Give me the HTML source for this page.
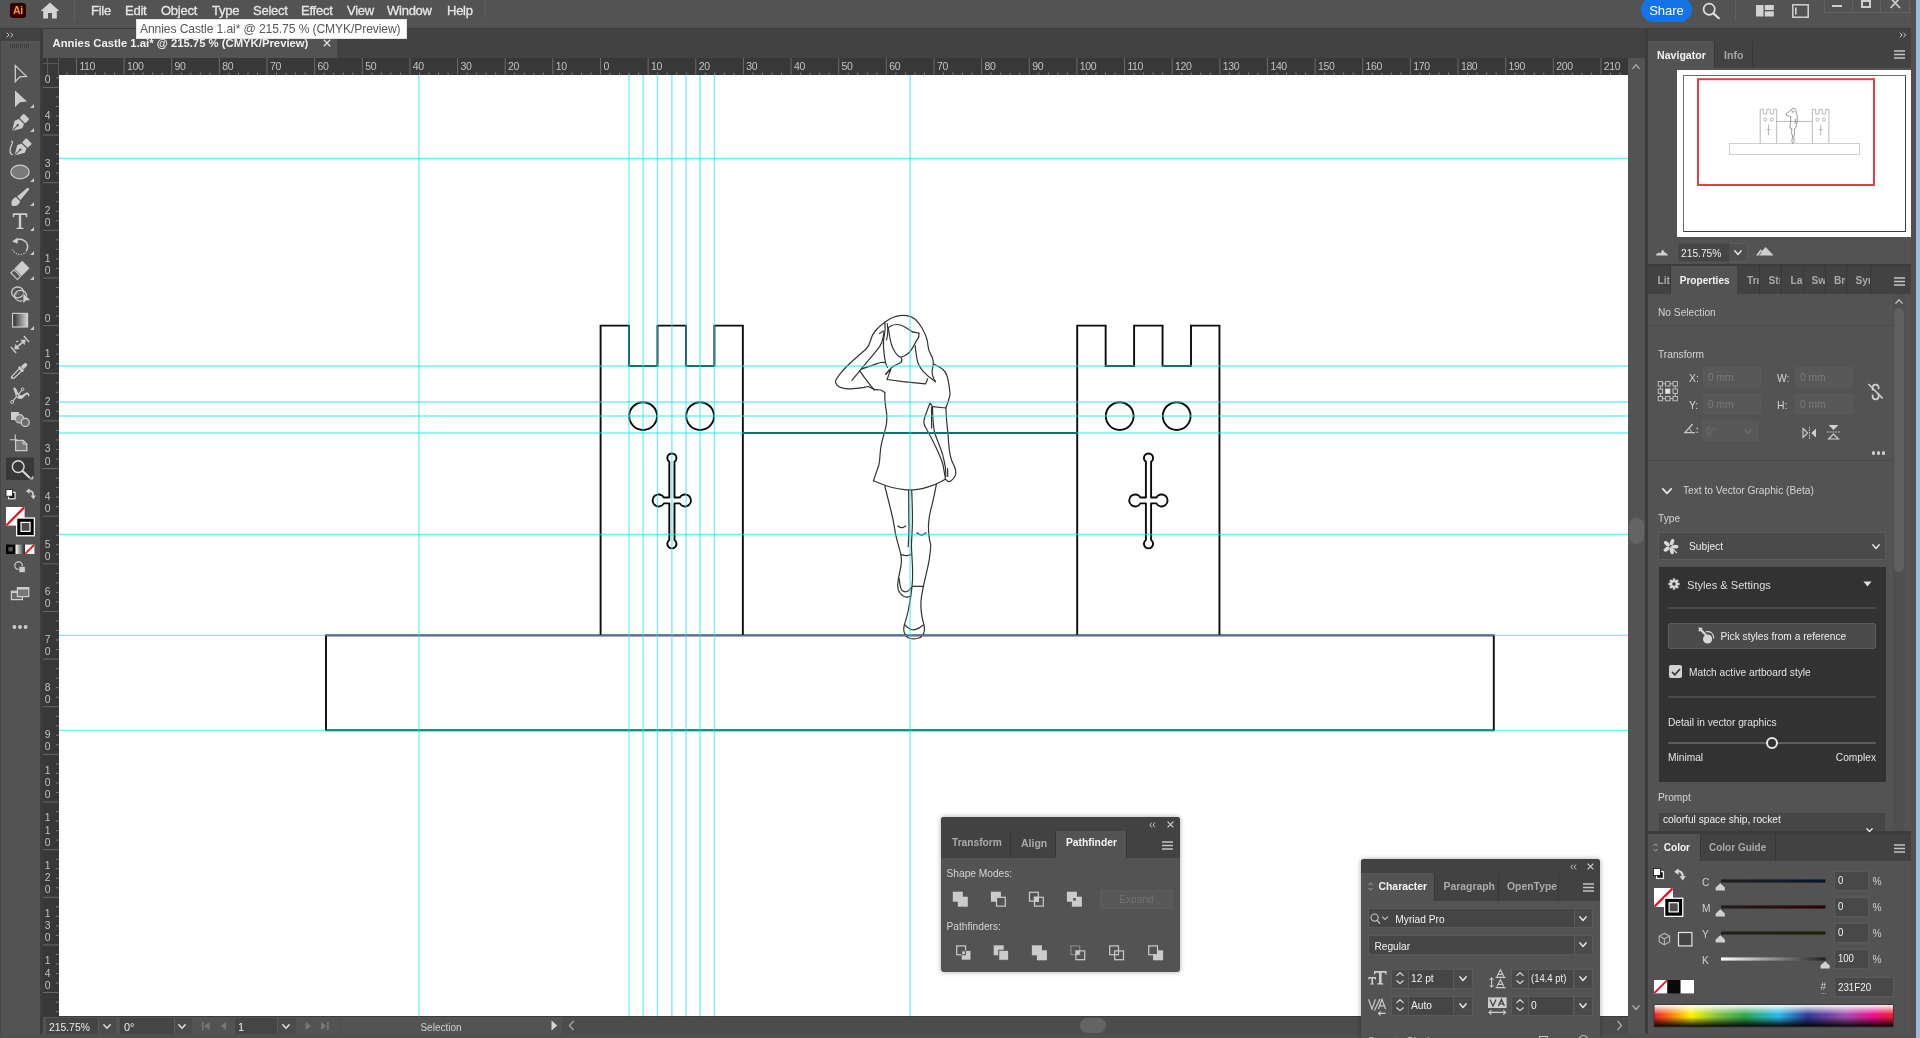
<!DOCTYPE html>
<html><head><meta charset="utf-8"><title>Annies Castle 1.ai</title>
<style>
html,body{margin:0;padding:0;background:#535353;}
body{width:1920px;height:1038px;overflow:hidden;position:relative;font-family:"Liberation Sans",sans-serif;}
#app{position:absolute;left:0;top:0;width:1920px;height:1038px;overflow:hidden;will-change:transform;}
#app div,#app svg,#app span.a{position:absolute;box-sizing:border-box;}
#app svg{overflow:visible;}
.t{white-space:nowrap;}
</style></head><body><div id="app">

<div style="left:0px;top:28px;width:1920px;height:1010px;background:#3c3c3c;"></div>
<div style="left:0px;top:0px;width:1920px;height:28px;background:#535353;"></div>
<div style="left:0px;top:29px;width:40px;height:12px;background:#424242;"></div>
<div style="left:0px;top:41px;width:40px;height:993px;background:#535353;"></div>
<div style="left:0px;top:29px;width:1px;height:1005px;background:#464646;"></div>
<svg style="left:6px;top:32px" width="8" height="6" viewBox="0 0 8 6"><path d="M0.7 0.7L3 3L0.7 5.3M4.4 0.7L6.7 3L4.4 5.3" fill="none" stroke="#c8c8c8" stroke-width="1"/></svg>
<svg style="left:10px;top:44px" width="20" height="4"><rect x="0" y="0" width="1" height="4" fill="#3e3e3e"/><rect x="2" y="0" width="1" height="4" fill="#3e3e3e"/><rect x="4" y="0" width="1" height="4" fill="#3e3e3e"/><rect x="6" y="0" width="1" height="4" fill="#3e3e3e"/><rect x="8" y="0" width="1" height="4" fill="#3e3e3e"/><rect x="10" y="0" width="1" height="4" fill="#3e3e3e"/><rect x="12" y="0" width="1" height="4" fill="#3e3e3e"/><rect x="14" y="0" width="1" height="4" fill="#3e3e3e"/><rect x="16" y="0" width="1" height="4" fill="#3e3e3e"/><rect x="18" y="0" width="1" height="4" fill="#3e3e3e"/></svg>
<div style="left:43px;top:29px;width:1602px;height:29px;background:#424242;"></div>
<div style="left:43px;top:29px;width:294px;height:29px;background:#535353;"></div>
<div style="left:52.5px;top:36px;font-size:11.3px;line-height:14.3px;color:#f0f0f0;white-space:nowrap;font-weight:bold;letter-spacing:0px;">Annies Castle 1.ai* @ 215.75 % (CMYK/Preview)</div>
<svg style="left:323px;top:39px" width="8" height="8" viewBox="0 0 8 8"><path d="M0.8 0.8L7.2 7.2M7.2 0.8L0.8 7.2" stroke="#e0e0e0" stroke-width="1.3"/></svg>
<div style="left:43px;top:58px;width:1585px;height:17px;background:#383838;"></div>
<div style="left:43px;top:75px;width:16px;height:941.2px;background:#383838;"></div>
<div style="left:43px;top:63px;width:16px;height:1px;background:#5a5a5a;"></div>
<div style="left:47px;top:58px;width:1px;height:17px;background:#5a5a5a;"></div>
<div style="left:58px;top:58px;width:1px;height:17px;background:#5a5a5a;"></div>
<svg style="left:0;top:0" width="1920" height="80"><rect x="66.43" y="72.5" width="1" height="2.5" fill="#7c7c7c"/><rect x="75.96" y="58" width="1" height="17" fill="#6a6a6a"/><rect x="85.49" y="72.5" width="1" height="2.5" fill="#7c7c7c"/><rect x="95.02" y="72.5" width="1" height="2.5" fill="#7c7c7c"/><rect x="104.54" y="72.5" width="1" height="2.5" fill="#7c7c7c"/><rect x="114.07" y="72.5" width="1" height="2.5" fill="#7c7c7c"/><rect x="123.60" y="58" width="1" height="17" fill="#6a6a6a"/><rect x="133.13" y="72.5" width="1" height="2.5" fill="#7c7c7c"/><rect x="142.66" y="72.5" width="1" height="2.5" fill="#7c7c7c"/><rect x="152.18" y="72.5" width="1" height="2.5" fill="#7c7c7c"/><rect x="161.71" y="72.5" width="1" height="2.5" fill="#7c7c7c"/><rect x="171.24" y="58" width="1" height="17" fill="#6a6a6a"/><rect x="180.77" y="72.5" width="1" height="2.5" fill="#7c7c7c"/><rect x="190.30" y="72.5" width="1" height="2.5" fill="#7c7c7c"/><rect x="199.82" y="72.5" width="1" height="2.5" fill="#7c7c7c"/><rect x="209.35" y="72.5" width="1" height="2.5" fill="#7c7c7c"/><rect x="218.88" y="58" width="1" height="17" fill="#6a6a6a"/><rect x="228.41" y="72.5" width="1" height="2.5" fill="#7c7c7c"/><rect x="237.94" y="72.5" width="1" height="2.5" fill="#7c7c7c"/><rect x="247.46" y="72.5" width="1" height="2.5" fill="#7c7c7c"/><rect x="256.99" y="72.5" width="1" height="2.5" fill="#7c7c7c"/><rect x="266.52" y="58" width="1" height="17" fill="#6a6a6a"/><rect x="276.05" y="72.5" width="1" height="2.5" fill="#7c7c7c"/><rect x="285.58" y="72.5" width="1" height="2.5" fill="#7c7c7c"/><rect x="295.10" y="72.5" width="1" height="2.5" fill="#7c7c7c"/><rect x="304.63" y="72.5" width="1" height="2.5" fill="#7c7c7c"/><rect x="314.16" y="58" width="1" height="17" fill="#6a6a6a"/><rect x="323.69" y="72.5" width="1" height="2.5" fill="#7c7c7c"/><rect x="333.22" y="72.5" width="1" height="2.5" fill="#7c7c7c"/><rect x="342.74" y="72.5" width="1" height="2.5" fill="#7c7c7c"/><rect x="352.27" y="72.5" width="1" height="2.5" fill="#7c7c7c"/><rect x="361.80" y="58" width="1" height="17" fill="#6a6a6a"/><rect x="371.33" y="72.5" width="1" height="2.5" fill="#7c7c7c"/><rect x="380.86" y="72.5" width="1" height="2.5" fill="#7c7c7c"/><rect x="390.38" y="72.5" width="1" height="2.5" fill="#7c7c7c"/><rect x="399.91" y="72.5" width="1" height="2.5" fill="#7c7c7c"/><rect x="409.44" y="58" width="1" height="17" fill="#6a6a6a"/><rect x="418.97" y="72.5" width="1" height="2.5" fill="#7c7c7c"/><rect x="428.50" y="72.5" width="1" height="2.5" fill="#7c7c7c"/><rect x="438.02" y="72.5" width="1" height="2.5" fill="#7c7c7c"/><rect x="447.55" y="72.5" width="1" height="2.5" fill="#7c7c7c"/><rect x="457.08" y="58" width="1" height="17" fill="#6a6a6a"/><rect x="466.61" y="72.5" width="1" height="2.5" fill="#7c7c7c"/><rect x="476.14" y="72.5" width="1" height="2.5" fill="#7c7c7c"/><rect x="485.66" y="72.5" width="1" height="2.5" fill="#7c7c7c"/><rect x="495.19" y="72.5" width="1" height="2.5" fill="#7c7c7c"/><rect x="504.72" y="58" width="1" height="17" fill="#6a6a6a"/><rect x="514.25" y="72.5" width="1" height="2.5" fill="#7c7c7c"/><rect x="523.78" y="72.5" width="1" height="2.5" fill="#7c7c7c"/><rect x="533.30" y="72.5" width="1" height="2.5" fill="#7c7c7c"/><rect x="542.83" y="72.5" width="1" height="2.5" fill="#7c7c7c"/><rect x="552.36" y="58" width="1" height="17" fill="#6a6a6a"/><rect x="561.89" y="72.5" width="1" height="2.5" fill="#7c7c7c"/><rect x="571.42" y="72.5" width="1" height="2.5" fill="#7c7c7c"/><rect x="580.94" y="72.5" width="1" height="2.5" fill="#7c7c7c"/><rect x="590.47" y="72.5" width="1" height="2.5" fill="#7c7c7c"/><rect x="600.00" y="58" width="1" height="17" fill="#6a6a6a"/><rect x="609.53" y="72.5" width="1" height="2.5" fill="#7c7c7c"/><rect x="619.06" y="72.5" width="1" height="2.5" fill="#7c7c7c"/><rect x="628.58" y="72.5" width="1" height="2.5" fill="#7c7c7c"/><rect x="638.11" y="72.5" width="1" height="2.5" fill="#7c7c7c"/><rect x="647.64" y="58" width="1" height="17" fill="#6a6a6a"/><rect x="657.17" y="72.5" width="1" height="2.5" fill="#7c7c7c"/><rect x="666.70" y="72.5" width="1" height="2.5" fill="#7c7c7c"/><rect x="676.22" y="72.5" width="1" height="2.5" fill="#7c7c7c"/><rect x="685.75" y="72.5" width="1" height="2.5" fill="#7c7c7c"/><rect x="695.28" y="58" width="1" height="17" fill="#6a6a6a"/><rect x="704.81" y="72.5" width="1" height="2.5" fill="#7c7c7c"/><rect x="714.34" y="72.5" width="1" height="2.5" fill="#7c7c7c"/><rect x="723.86" y="72.5" width="1" height="2.5" fill="#7c7c7c"/><rect x="733.39" y="72.5" width="1" height="2.5" fill="#7c7c7c"/><rect x="742.92" y="58" width="1" height="17" fill="#6a6a6a"/><rect x="752.45" y="72.5" width="1" height="2.5" fill="#7c7c7c"/><rect x="761.98" y="72.5" width="1" height="2.5" fill="#7c7c7c"/><rect x="771.50" y="72.5" width="1" height="2.5" fill="#7c7c7c"/><rect x="781.03" y="72.5" width="1" height="2.5" fill="#7c7c7c"/><rect x="790.56" y="58" width="1" height="17" fill="#6a6a6a"/><rect x="800.09" y="72.5" width="1" height="2.5" fill="#7c7c7c"/><rect x="809.62" y="72.5" width="1" height="2.5" fill="#7c7c7c"/><rect x="819.14" y="72.5" width="1" height="2.5" fill="#7c7c7c"/><rect x="828.67" y="72.5" width="1" height="2.5" fill="#7c7c7c"/><rect x="838.20" y="58" width="1" height="17" fill="#6a6a6a"/><rect x="847.73" y="72.5" width="1" height="2.5" fill="#7c7c7c"/><rect x="857.26" y="72.5" width="1" height="2.5" fill="#7c7c7c"/><rect x="866.78" y="72.5" width="1" height="2.5" fill="#7c7c7c"/><rect x="876.31" y="72.5" width="1" height="2.5" fill="#7c7c7c"/><rect x="885.84" y="58" width="1" height="17" fill="#6a6a6a"/><rect x="895.37" y="72.5" width="1" height="2.5" fill="#7c7c7c"/><rect x="904.90" y="72.5" width="1" height="2.5" fill="#7c7c7c"/><rect x="914.42" y="72.5" width="1" height="2.5" fill="#7c7c7c"/><rect x="923.95" y="72.5" width="1" height="2.5" fill="#7c7c7c"/><rect x="933.48" y="58" width="1" height="17" fill="#6a6a6a"/><rect x="943.01" y="72.5" width="1" height="2.5" fill="#7c7c7c"/><rect x="952.54" y="72.5" width="1" height="2.5" fill="#7c7c7c"/><rect x="962.06" y="72.5" width="1" height="2.5" fill="#7c7c7c"/><rect x="971.59" y="72.5" width="1" height="2.5" fill="#7c7c7c"/><rect x="981.12" y="58" width="1" height="17" fill="#6a6a6a"/><rect x="990.65" y="72.5" width="1" height="2.5" fill="#7c7c7c"/><rect x="1000.18" y="72.5" width="1" height="2.5" fill="#7c7c7c"/><rect x="1009.70" y="72.5" width="1" height="2.5" fill="#7c7c7c"/><rect x="1019.23" y="72.5" width="1" height="2.5" fill="#7c7c7c"/><rect x="1028.76" y="58" width="1" height="17" fill="#6a6a6a"/><rect x="1038.29" y="72.5" width="1" height="2.5" fill="#7c7c7c"/><rect x="1047.82" y="72.5" width="1" height="2.5" fill="#7c7c7c"/><rect x="1057.34" y="72.5" width="1" height="2.5" fill="#7c7c7c"/><rect x="1066.87" y="72.5" width="1" height="2.5" fill="#7c7c7c"/><rect x="1076.40" y="58" width="1" height="17" fill="#6a6a6a"/><rect x="1085.93" y="72.5" width="1" height="2.5" fill="#7c7c7c"/><rect x="1095.46" y="72.5" width="1" height="2.5" fill="#7c7c7c"/><rect x="1104.98" y="72.5" width="1" height="2.5" fill="#7c7c7c"/><rect x="1114.51" y="72.5" width="1" height="2.5" fill="#7c7c7c"/><rect x="1124.04" y="58" width="1" height="17" fill="#6a6a6a"/><rect x="1133.57" y="72.5" width="1" height="2.5" fill="#7c7c7c"/><rect x="1143.10" y="72.5" width="1" height="2.5" fill="#7c7c7c"/><rect x="1152.62" y="72.5" width="1" height="2.5" fill="#7c7c7c"/><rect x="1162.15" y="72.5" width="1" height="2.5" fill="#7c7c7c"/><rect x="1171.68" y="58" width="1" height="17" fill="#6a6a6a"/><rect x="1181.21" y="72.5" width="1" height="2.5" fill="#7c7c7c"/><rect x="1190.74" y="72.5" width="1" height="2.5" fill="#7c7c7c"/><rect x="1200.26" y="72.5" width="1" height="2.5" fill="#7c7c7c"/><rect x="1209.79" y="72.5" width="1" height="2.5" fill="#7c7c7c"/><rect x="1219.32" y="58" width="1" height="17" fill="#6a6a6a"/><rect x="1228.85" y="72.5" width="1" height="2.5" fill="#7c7c7c"/><rect x="1238.38" y="72.5" width="1" height="2.5" fill="#7c7c7c"/><rect x="1247.90" y="72.5" width="1" height="2.5" fill="#7c7c7c"/><rect x="1257.43" y="72.5" width="1" height="2.5" fill="#7c7c7c"/><rect x="1266.96" y="58" width="1" height="17" fill="#6a6a6a"/><rect x="1276.49" y="72.5" width="1" height="2.5" fill="#7c7c7c"/><rect x="1286.02" y="72.5" width="1" height="2.5" fill="#7c7c7c"/><rect x="1295.54" y="72.5" width="1" height="2.5" fill="#7c7c7c"/><rect x="1305.07" y="72.5" width="1" height="2.5" fill="#7c7c7c"/><rect x="1314.60" y="58" width="1" height="17" fill="#6a6a6a"/><rect x="1324.13" y="72.5" width="1" height="2.5" fill="#7c7c7c"/><rect x="1333.66" y="72.5" width="1" height="2.5" fill="#7c7c7c"/><rect x="1343.18" y="72.5" width="1" height="2.5" fill="#7c7c7c"/><rect x="1352.71" y="72.5" width="1" height="2.5" fill="#7c7c7c"/><rect x="1362.24" y="58" width="1" height="17" fill="#6a6a6a"/><rect x="1371.77" y="72.5" width="1" height="2.5" fill="#7c7c7c"/><rect x="1381.30" y="72.5" width="1" height="2.5" fill="#7c7c7c"/><rect x="1390.82" y="72.5" width="1" height="2.5" fill="#7c7c7c"/><rect x="1400.35" y="72.5" width="1" height="2.5" fill="#7c7c7c"/><rect x="1409.88" y="58" width="1" height="17" fill="#6a6a6a"/><rect x="1419.41" y="72.5" width="1" height="2.5" fill="#7c7c7c"/><rect x="1428.94" y="72.5" width="1" height="2.5" fill="#7c7c7c"/><rect x="1438.46" y="72.5" width="1" height="2.5" fill="#7c7c7c"/><rect x="1447.99" y="72.5" width="1" height="2.5" fill="#7c7c7c"/><rect x="1457.52" y="58" width="1" height="17" fill="#6a6a6a"/><rect x="1467.05" y="72.5" width="1" height="2.5" fill="#7c7c7c"/><rect x="1476.58" y="72.5" width="1" height="2.5" fill="#7c7c7c"/><rect x="1486.10" y="72.5" width="1" height="2.5" fill="#7c7c7c"/><rect x="1495.63" y="72.5" width="1" height="2.5" fill="#7c7c7c"/><rect x="1505.16" y="58" width="1" height="17" fill="#6a6a6a"/><rect x="1514.69" y="72.5" width="1" height="2.5" fill="#7c7c7c"/><rect x="1524.22" y="72.5" width="1" height="2.5" fill="#7c7c7c"/><rect x="1533.74" y="72.5" width="1" height="2.5" fill="#7c7c7c"/><rect x="1543.27" y="72.5" width="1" height="2.5" fill="#7c7c7c"/><rect x="1552.80" y="58" width="1" height="17" fill="#6a6a6a"/><rect x="1562.33" y="72.5" width="1" height="2.5" fill="#7c7c7c"/><rect x="1571.86" y="72.5" width="1" height="2.5" fill="#7c7c7c"/><rect x="1581.38" y="72.5" width="1" height="2.5" fill="#7c7c7c"/><rect x="1590.91" y="72.5" width="1" height="2.5" fill="#7c7c7c"/><rect x="1600.44" y="58" width="1" height="17" fill="#6a6a6a"/><rect x="1609.97" y="72.5" width="1" height="2.5" fill="#7c7c7c"/><rect x="1619.50" y="72.5" width="1" height="2.5" fill="#7c7c7c"/></svg>
<div style="left:79.4px;top:59.5px;font-size:10.5px;line-height:13px;color:#c2c2c2;white-space:nowrap;letter-spacing:-0.35px;">110</div>
<div style="left:127.0px;top:59.5px;font-size:10.5px;line-height:13px;color:#c2c2c2;white-space:nowrap;letter-spacing:-0.35px;">100</div>
<div style="left:174.6px;top:59.5px;font-size:10.5px;line-height:13px;color:#c2c2c2;white-space:nowrap;letter-spacing:-0.35px;">90</div>
<div style="left:222.3px;top:59.5px;font-size:10.5px;line-height:13px;color:#c2c2c2;white-space:nowrap;letter-spacing:-0.35px;">80</div>
<div style="left:269.9px;top:59.5px;font-size:10.5px;line-height:13px;color:#c2c2c2;white-space:nowrap;letter-spacing:-0.35px;">70</div>
<div style="left:317.6px;top:59.5px;font-size:10.5px;line-height:13px;color:#c2c2c2;white-space:nowrap;letter-spacing:-0.35px;">60</div>
<div style="left:365.2px;top:59.5px;font-size:10.5px;line-height:13px;color:#c2c2c2;white-space:nowrap;letter-spacing:-0.35px;">50</div>
<div style="left:412.8px;top:59.5px;font-size:10.5px;line-height:13px;color:#c2c2c2;white-space:nowrap;letter-spacing:-0.35px;">40</div>
<div style="left:460.5px;top:59.5px;font-size:10.5px;line-height:13px;color:#c2c2c2;white-space:nowrap;letter-spacing:-0.35px;">30</div>
<div style="left:508.1px;top:59.5px;font-size:10.5px;line-height:13px;color:#c2c2c2;white-space:nowrap;letter-spacing:-0.35px;">20</div>
<div style="left:555.8px;top:59.5px;font-size:10.5px;line-height:13px;color:#c2c2c2;white-space:nowrap;letter-spacing:-0.35px;">10</div>
<div style="left:603.4px;top:59.5px;font-size:10.5px;line-height:13px;color:#c2c2c2;white-space:nowrap;letter-spacing:-0.35px;">0</div>
<div style="left:651.0px;top:59.5px;font-size:10.5px;line-height:13px;color:#c2c2c2;white-space:nowrap;letter-spacing:-0.35px;">10</div>
<div style="left:698.7px;top:59.5px;font-size:10.5px;line-height:13px;color:#c2c2c2;white-space:nowrap;letter-spacing:-0.35px;">20</div>
<div style="left:746.3px;top:59.5px;font-size:10.5px;line-height:13px;color:#c2c2c2;white-space:nowrap;letter-spacing:-0.35px;">30</div>
<div style="left:794.0px;top:59.5px;font-size:10.5px;line-height:13px;color:#c2c2c2;white-space:nowrap;letter-spacing:-0.35px;">40</div>
<div style="left:841.6px;top:59.5px;font-size:10.5px;line-height:13px;color:#c2c2c2;white-space:nowrap;letter-spacing:-0.35px;">50</div>
<div style="left:889.2px;top:59.5px;font-size:10.5px;line-height:13px;color:#c2c2c2;white-space:nowrap;letter-spacing:-0.35px;">60</div>
<div style="left:936.9px;top:59.5px;font-size:10.5px;line-height:13px;color:#c2c2c2;white-space:nowrap;letter-spacing:-0.35px;">70</div>
<div style="left:984.5px;top:59.5px;font-size:10.5px;line-height:13px;color:#c2c2c2;white-space:nowrap;letter-spacing:-0.35px;">80</div>
<div style="left:1032.2px;top:59.5px;font-size:10.5px;line-height:13px;color:#c2c2c2;white-space:nowrap;letter-spacing:-0.35px;">90</div>
<div style="left:1079.8px;top:59.5px;font-size:10.5px;line-height:13px;color:#c2c2c2;white-space:nowrap;letter-spacing:-0.35px;">100</div>
<div style="left:1127.4px;top:59.5px;font-size:10.5px;line-height:13px;color:#c2c2c2;white-space:nowrap;letter-spacing:-0.35px;">110</div>
<div style="left:1175.1px;top:59.5px;font-size:10.5px;line-height:13px;color:#c2c2c2;white-space:nowrap;letter-spacing:-0.35px;">120</div>
<div style="left:1222.7px;top:59.5px;font-size:10.5px;line-height:13px;color:#c2c2c2;white-space:nowrap;letter-spacing:-0.35px;">130</div>
<div style="left:1270.4px;top:59.5px;font-size:10.5px;line-height:13px;color:#c2c2c2;white-space:nowrap;letter-spacing:-0.35px;">140</div>
<div style="left:1318.0px;top:59.5px;font-size:10.5px;line-height:13px;color:#c2c2c2;white-space:nowrap;letter-spacing:-0.35px;">150</div>
<div style="left:1365.6px;top:59.5px;font-size:10.5px;line-height:13px;color:#c2c2c2;white-space:nowrap;letter-spacing:-0.35px;">160</div>
<div style="left:1413.3px;top:59.5px;font-size:10.5px;line-height:13px;color:#c2c2c2;white-space:nowrap;letter-spacing:-0.35px;">170</div>
<div style="left:1460.9px;top:59.5px;font-size:10.5px;line-height:13px;color:#c2c2c2;white-space:nowrap;letter-spacing:-0.35px;">180</div>
<div style="left:1508.6px;top:59.5px;font-size:10.5px;line-height:13px;color:#c2c2c2;white-space:nowrap;letter-spacing:-0.35px;">190</div>
<div style="left:1556.2px;top:59.5px;font-size:10.5px;line-height:13px;color:#c2c2c2;white-space:nowrap;letter-spacing:-0.35px;">200</div>
<div style="left:1603.8px;top:59.5px;font-size:10.5px;line-height:13px;color:#c2c2c2;white-space:nowrap;letter-spacing:-0.35px;">210</div>
<svg style="left:0;top:0" width="60" height="1038"><rect x="56" y="77.37" width="3" height="1" fill="#7c7c7c"/><rect x="43" y="86.90" width="16" height="1" fill="#6a6a6a"/><rect x="56" y="96.43" width="3" height="1" fill="#7c7c7c"/><rect x="56" y="105.96" width="3" height="1" fill="#7c7c7c"/><rect x="56" y="115.48" width="3" height="1" fill="#7c7c7c"/><rect x="56" y="125.01" width="3" height="1" fill="#7c7c7c"/><rect x="43" y="134.54" width="16" height="1" fill="#6a6a6a"/><rect x="56" y="144.07" width="3" height="1" fill="#7c7c7c"/><rect x="56" y="153.60" width="3" height="1" fill="#7c7c7c"/><rect x="56" y="163.12" width="3" height="1" fill="#7c7c7c"/><rect x="56" y="172.65" width="3" height="1" fill="#7c7c7c"/><rect x="43" y="182.18" width="16" height="1" fill="#6a6a6a"/><rect x="56" y="191.71" width="3" height="1" fill="#7c7c7c"/><rect x="56" y="201.24" width="3" height="1" fill="#7c7c7c"/><rect x="56" y="210.76" width="3" height="1" fill="#7c7c7c"/><rect x="56" y="220.29" width="3" height="1" fill="#7c7c7c"/><rect x="43" y="229.82" width="16" height="1" fill="#6a6a6a"/><rect x="56" y="239.35" width="3" height="1" fill="#7c7c7c"/><rect x="56" y="248.88" width="3" height="1" fill="#7c7c7c"/><rect x="56" y="258.40" width="3" height="1" fill="#7c7c7c"/><rect x="56" y="267.93" width="3" height="1" fill="#7c7c7c"/><rect x="43" y="277.46" width="16" height="1" fill="#6a6a6a"/><rect x="56" y="286.99" width="3" height="1" fill="#7c7c7c"/><rect x="56" y="296.52" width="3" height="1" fill="#7c7c7c"/><rect x="56" y="306.04" width="3" height="1" fill="#7c7c7c"/><rect x="56" y="315.57" width="3" height="1" fill="#7c7c7c"/><rect x="43" y="325.10" width="16" height="1" fill="#6a6a6a"/><rect x="56" y="334.63" width="3" height="1" fill="#7c7c7c"/><rect x="56" y="344.16" width="3" height="1" fill="#7c7c7c"/><rect x="56" y="353.68" width="3" height="1" fill="#7c7c7c"/><rect x="56" y="363.21" width="3" height="1" fill="#7c7c7c"/><rect x="43" y="372.74" width="16" height="1" fill="#6a6a6a"/><rect x="56" y="382.27" width="3" height="1" fill="#7c7c7c"/><rect x="56" y="391.80" width="3" height="1" fill="#7c7c7c"/><rect x="56" y="401.32" width="3" height="1" fill="#7c7c7c"/><rect x="56" y="410.85" width="3" height="1" fill="#7c7c7c"/><rect x="43" y="420.38" width="16" height="1" fill="#6a6a6a"/><rect x="56" y="429.91" width="3" height="1" fill="#7c7c7c"/><rect x="56" y="439.44" width="3" height="1" fill="#7c7c7c"/><rect x="56" y="448.96" width="3" height="1" fill="#7c7c7c"/><rect x="56" y="458.49" width="3" height="1" fill="#7c7c7c"/><rect x="43" y="468.02" width="16" height="1" fill="#6a6a6a"/><rect x="56" y="477.55" width="3" height="1" fill="#7c7c7c"/><rect x="56" y="487.08" width="3" height="1" fill="#7c7c7c"/><rect x="56" y="496.60" width="3" height="1" fill="#7c7c7c"/><rect x="56" y="506.13" width="3" height="1" fill="#7c7c7c"/><rect x="43" y="515.66" width="16" height="1" fill="#6a6a6a"/><rect x="56" y="525.19" width="3" height="1" fill="#7c7c7c"/><rect x="56" y="534.72" width="3" height="1" fill="#7c7c7c"/><rect x="56" y="544.24" width="3" height="1" fill="#7c7c7c"/><rect x="56" y="553.77" width="3" height="1" fill="#7c7c7c"/><rect x="43" y="563.30" width="16" height="1" fill="#6a6a6a"/><rect x="56" y="572.83" width="3" height="1" fill="#7c7c7c"/><rect x="56" y="582.36" width="3" height="1" fill="#7c7c7c"/><rect x="56" y="591.88" width="3" height="1" fill="#7c7c7c"/><rect x="56" y="601.41" width="3" height="1" fill="#7c7c7c"/><rect x="43" y="610.94" width="16" height="1" fill="#6a6a6a"/><rect x="56" y="620.47" width="3" height="1" fill="#7c7c7c"/><rect x="56" y="630.00" width="3" height="1" fill="#7c7c7c"/><rect x="56" y="639.52" width="3" height="1" fill="#7c7c7c"/><rect x="56" y="649.05" width="3" height="1" fill="#7c7c7c"/><rect x="43" y="658.58" width="16" height="1" fill="#6a6a6a"/><rect x="56" y="668.11" width="3" height="1" fill="#7c7c7c"/><rect x="56" y="677.64" width="3" height="1" fill="#7c7c7c"/><rect x="56" y="687.16" width="3" height="1" fill="#7c7c7c"/><rect x="56" y="696.69" width="3" height="1" fill="#7c7c7c"/><rect x="43" y="706.22" width="16" height="1" fill="#6a6a6a"/><rect x="56" y="715.75" width="3" height="1" fill="#7c7c7c"/><rect x="56" y="725.28" width="3" height="1" fill="#7c7c7c"/><rect x="56" y="734.80" width="3" height="1" fill="#7c7c7c"/><rect x="56" y="744.33" width="3" height="1" fill="#7c7c7c"/><rect x="43" y="753.86" width="16" height="1" fill="#6a6a6a"/><rect x="56" y="763.39" width="3" height="1" fill="#7c7c7c"/><rect x="56" y="772.92" width="3" height="1" fill="#7c7c7c"/><rect x="56" y="782.44" width="3" height="1" fill="#7c7c7c"/><rect x="56" y="791.97" width="3" height="1" fill="#7c7c7c"/><rect x="43" y="801.50" width="16" height="1" fill="#6a6a6a"/><rect x="56" y="811.03" width="3" height="1" fill="#7c7c7c"/><rect x="56" y="820.56" width="3" height="1" fill="#7c7c7c"/><rect x="56" y="830.08" width="3" height="1" fill="#7c7c7c"/><rect x="56" y="839.61" width="3" height="1" fill="#7c7c7c"/><rect x="43" y="849.14" width="16" height="1" fill="#6a6a6a"/><rect x="56" y="858.67" width="3" height="1" fill="#7c7c7c"/><rect x="56" y="868.20" width="3" height="1" fill="#7c7c7c"/><rect x="56" y="877.72" width="3" height="1" fill="#7c7c7c"/><rect x="56" y="887.25" width="3" height="1" fill="#7c7c7c"/><rect x="43" y="896.78" width="16" height="1" fill="#6a6a6a"/><rect x="56" y="906.31" width="3" height="1" fill="#7c7c7c"/><rect x="56" y="915.84" width="3" height="1" fill="#7c7c7c"/><rect x="56" y="925.36" width="3" height="1" fill="#7c7c7c"/><rect x="56" y="934.89" width="3" height="1" fill="#7c7c7c"/><rect x="43" y="944.42" width="16" height="1" fill="#6a6a6a"/><rect x="56" y="953.95" width="3" height="1" fill="#7c7c7c"/><rect x="56" y="963.48" width="3" height="1" fill="#7c7c7c"/><rect x="56" y="973.00" width="3" height="1" fill="#7c7c7c"/><rect x="56" y="982.53" width="3" height="1" fill="#7c7c7c"/><rect x="43" y="992.06" width="16" height="1" fill="#6a6a6a"/><rect x="56" y="1001.59" width="3" height="1" fill="#7c7c7c"/><rect x="56" y="1011.12" width="3" height="1" fill="#7c7c7c"/></svg>
<div style="left:43.6px;top:73.4px;font-size:10.3px;line-height:13px;color:#c2c2c2;white-space:nowrap;width:8px;text-align:center;">0</div>
<div style="left:43.6px;top:108.9px;font-size:10.3px;line-height:13px;color:#c2c2c2;white-space:nowrap;width:8px;text-align:center;">4</div>
<div style="left:43.6px;top:121.0px;font-size:10.3px;line-height:13px;color:#c2c2c2;white-space:nowrap;width:8px;text-align:center;">0</div>
<div style="left:43.6px;top:156.6px;font-size:10.3px;line-height:13px;color:#c2c2c2;white-space:nowrap;width:8px;text-align:center;">3</div>
<div style="left:43.6px;top:168.7px;font-size:10.3px;line-height:13px;color:#c2c2c2;white-space:nowrap;width:8px;text-align:center;">0</div>
<div style="left:43.6px;top:204.2px;font-size:10.3px;line-height:13px;color:#c2c2c2;white-space:nowrap;width:8px;text-align:center;">2</div>
<div style="left:43.6px;top:216.3px;font-size:10.3px;line-height:13px;color:#c2c2c2;white-space:nowrap;width:8px;text-align:center;">0</div>
<div style="left:43.6px;top:251.9px;font-size:10.3px;line-height:13px;color:#c2c2c2;white-space:nowrap;width:8px;text-align:center;">1</div>
<div style="left:43.6px;top:264.0px;font-size:10.3px;line-height:13px;color:#c2c2c2;white-space:nowrap;width:8px;text-align:center;">0</div>
<div style="left:43.6px;top:311.6px;font-size:10.3px;line-height:13px;color:#c2c2c2;white-space:nowrap;width:8px;text-align:center;">0</div>
<div style="left:43.6px;top:347.1px;font-size:10.3px;line-height:13px;color:#c2c2c2;white-space:nowrap;width:8px;text-align:center;">1</div>
<div style="left:43.6px;top:359.2px;font-size:10.3px;line-height:13px;color:#c2c2c2;white-space:nowrap;width:8px;text-align:center;">0</div>
<div style="left:43.6px;top:394.8px;font-size:10.3px;line-height:13px;color:#c2c2c2;white-space:nowrap;width:8px;text-align:center;">2</div>
<div style="left:43.6px;top:406.9px;font-size:10.3px;line-height:13px;color:#c2c2c2;white-space:nowrap;width:8px;text-align:center;">0</div>
<div style="left:43.6px;top:442.4px;font-size:10.3px;line-height:13px;color:#c2c2c2;white-space:nowrap;width:8px;text-align:center;">3</div>
<div style="left:43.6px;top:454.5px;font-size:10.3px;line-height:13px;color:#c2c2c2;white-space:nowrap;width:8px;text-align:center;">0</div>
<div style="left:43.6px;top:490.1px;font-size:10.3px;line-height:13px;color:#c2c2c2;white-space:nowrap;width:8px;text-align:center;">4</div>
<div style="left:43.6px;top:502.2px;font-size:10.3px;line-height:13px;color:#c2c2c2;white-space:nowrap;width:8px;text-align:center;">0</div>
<div style="left:43.6px;top:537.7px;font-size:10.3px;line-height:13px;color:#c2c2c2;white-space:nowrap;width:8px;text-align:center;">5</div>
<div style="left:43.6px;top:549.8px;font-size:10.3px;line-height:13px;color:#c2c2c2;white-space:nowrap;width:8px;text-align:center;">0</div>
<div style="left:43.6px;top:585.3px;font-size:10.3px;line-height:13px;color:#c2c2c2;white-space:nowrap;width:8px;text-align:center;">6</div>
<div style="left:43.6px;top:597.4px;font-size:10.3px;line-height:13px;color:#c2c2c2;white-space:nowrap;width:8px;text-align:center;">0</div>
<div style="left:43.6px;top:633.0px;font-size:10.3px;line-height:13px;color:#c2c2c2;white-space:nowrap;width:8px;text-align:center;">7</div>
<div style="left:43.6px;top:645.1px;font-size:10.3px;line-height:13px;color:#c2c2c2;white-space:nowrap;width:8px;text-align:center;">0</div>
<div style="left:43.6px;top:680.6px;font-size:10.3px;line-height:13px;color:#c2c2c2;white-space:nowrap;width:8px;text-align:center;">8</div>
<div style="left:43.6px;top:692.7px;font-size:10.3px;line-height:13px;color:#c2c2c2;white-space:nowrap;width:8px;text-align:center;">0</div>
<div style="left:43.6px;top:728.3px;font-size:10.3px;line-height:13px;color:#c2c2c2;white-space:nowrap;width:8px;text-align:center;">9</div>
<div style="left:43.6px;top:740.4px;font-size:10.3px;line-height:13px;color:#c2c2c2;white-space:nowrap;width:8px;text-align:center;">0</div>
<div style="left:43.6px;top:763.8px;font-size:10.3px;line-height:13px;color:#c2c2c2;white-space:nowrap;width:8px;text-align:center;">1</div>
<div style="left:43.6px;top:775.9px;font-size:10.3px;line-height:13px;color:#c2c2c2;white-space:nowrap;width:8px;text-align:center;">0</div>
<div style="left:43.6px;top:788.0px;font-size:10.3px;line-height:13px;color:#c2c2c2;white-space:nowrap;width:8px;text-align:center;">0</div>
<div style="left:43.6px;top:811.4px;font-size:10.3px;line-height:13px;color:#c2c2c2;white-space:nowrap;width:8px;text-align:center;">1</div>
<div style="left:43.6px;top:823.5px;font-size:10.3px;line-height:13px;color:#c2c2c2;white-space:nowrap;width:8px;text-align:center;">1</div>
<div style="left:43.6px;top:835.6px;font-size:10.3px;line-height:13px;color:#c2c2c2;white-space:nowrap;width:8px;text-align:center;">0</div>
<div style="left:43.6px;top:859.1px;font-size:10.3px;line-height:13px;color:#c2c2c2;white-space:nowrap;width:8px;text-align:center;">1</div>
<div style="left:43.6px;top:871.2px;font-size:10.3px;line-height:13px;color:#c2c2c2;white-space:nowrap;width:8px;text-align:center;">2</div>
<div style="left:43.6px;top:883.3px;font-size:10.3px;line-height:13px;color:#c2c2c2;white-space:nowrap;width:8px;text-align:center;">0</div>
<div style="left:43.6px;top:906.7px;font-size:10.3px;line-height:13px;color:#c2c2c2;white-space:nowrap;width:8px;text-align:center;">1</div>
<div style="left:43.6px;top:918.8px;font-size:10.3px;line-height:13px;color:#c2c2c2;white-space:nowrap;width:8px;text-align:center;">3</div>
<div style="left:43.6px;top:930.9px;font-size:10.3px;line-height:13px;color:#c2c2c2;white-space:nowrap;width:8px;text-align:center;">0</div>
<div style="left:43.6px;top:954.4px;font-size:10.3px;line-height:13px;color:#c2c2c2;white-space:nowrap;width:8px;text-align:center;">1</div>
<div style="left:43.6px;top:966.5px;font-size:10.3px;line-height:13px;color:#c2c2c2;white-space:nowrap;width:8px;text-align:center;">4</div>
<div style="left:43.6px;top:978.6px;font-size:10.3px;line-height:13px;color:#c2c2c2;white-space:nowrap;width:8px;text-align:center;">0</div>
<div style="left:59px;top:75px;width:1569px;height:941.2px;background:#ffffff;"></div>
<div style="left:1628px;top:58px;width:17px;height:959px;background:#535353;"></div>
<svg style="left:1632px;top:64px" width="8" height="6.0" viewBox="0 0 8 6.0"><path d="M0.8 4.5 L4.0 0.8 L7.2 4.5" fill="none" stroke="#a8a8a8" stroke-width="1.3" stroke-linecap="round" stroke-linejoin="round"/></svg>
<svg style="left:1632px;top:1005px" width="8" height="6.0" viewBox="0 0 8 6.0"><path d="M0.8 0.8 L4.0 4.5 L7.2 0.8" fill="none" stroke="#a8a8a8" stroke-width="1.3" stroke-linecap="round" stroke-linejoin="round"/></svg>
<div style="left:1629px;top:518px;width:15px;height:26px;background:#646464;border-radius:7px;"></div>
<div style="left:43px;top:1017px;width:1602px;height:17px;background:#535353;"></div>
<div style="left:0px;top:1034px;width:1920px;height:4px;background:#505050;"></div>
<svg style="left:0;top:0;clip-path:inset(75px 292px 21.8px 59px)" width="1920" height="1038" viewBox="0 0 1920 1038"><g fill="none" stroke="#0c0c0c" stroke-width="1.9" stroke-linejoin="miter"><path d="M600.60 635.4 L600.60 325.6 L629.05 325.6 L629.05 366.0 L657.50 366.0 L657.50 325.6 L685.95 325.6 L685.95 366.0 L714.40 366.0 L714.40 325.6 L742.85 325.6 L742.85 635.4"/><circle cx="643.10" cy="416.1" r="13.9"/><circle cx="700.10" cy="416.1" r="13.9"/><path d="M669.30 461.73 A4.55 4.55 0 1 1 674.50 461.73 L674.50 497.55 L679.75 497.55 A6.0 6.0 0 1 1 679.75 503.35 L674.50 503.35 L674.50 540.07 A4.55 4.55 0 1 1 669.30 540.07 L669.30 503.35 L663.85 503.35 A6.0 6.0 0 1 1 663.85 497.55 L669.30 497.55 Z" stroke-linejoin="round"/><path d="M1077.20 635.4 L1077.20 325.6 L1105.65 325.6 L1105.65 366.0 L1134.10 366.0 L1134.10 325.6 L1162.55 325.6 L1162.55 366.0 L1191.00 366.0 L1191.00 325.6 L1219.45 325.6 L1219.45 635.4"/><circle cx="1119.70" cy="416.1" r="13.9"/><circle cx="1176.70" cy="416.1" r="13.9"/><path d="M1145.90 461.73 A4.55 4.55 0 1 1 1151.10 461.73 L1151.10 497.55 L1156.35 497.55 A6.0 6.0 0 1 1 1156.35 503.35 L1151.10 503.35 L1151.10 540.07 A4.55 4.55 0 1 1 1145.90 540.07 L1145.90 503.35 L1140.45 503.35 A6.0 6.0 0 1 1 1140.45 497.55 L1145.90 497.55 Z" stroke-linejoin="round"/><rect x="326" y="635.4" width="1167.8" height="94.9"/><path d="M743 433 L1077 433"/></g><g fill="none" stroke="#333333" stroke-width="1.2" stroke-linecap="round" stroke-linejoin="round"><path d="M884.8 322.3 Q890.9 317.6 896.1 316.3 Q901.3 315.0 906.5 315.6 Q911.7 316.3 915.2 319.3 Q918.6 322.3 921.7 327.5 Q924.7 332.7 926.2 337.0 Q927.7 341.4 928.0 345.8 Q928.2 350.1 930.4 353.6 Q932.5 357.0 933.1 360.5 Q933.8 364.0 932.7 367.4 Q931.6 370.9 932.5 374.8 Q933.4 378.7 934.5 380.2 L935.5 381.7"/><path d="M935.5 381.7 Q928.2 377.0 923.2 371.4 Q918.2 365.7 917.1 359.6 Q916.0 353.5 915.6 349.6 L915.2 345.7"/><path d="M888.3 327.5 Q890.0 339.7 891.3 344.0 Q892.6 348.3 894.8 351.8 Q897.0 355.3 899.1 356.6 Q901.3 357.9 905.6 355.3 Q910.0 352.7 912.6 347.9 Q915.2 343.1 916.9 340.1 L918.6 337.1"/><path d="M918.6 337.1 L919.1 333.2 L912.6 331.9"/><path d="M912.6 331.9 Q907.4 328.4 903.9 326.4 Q900.4 324.5 897.0 324.5 Q893.5 324.5 890.9 326.0 L888.3 327.5"/><path d="M901.3 357.9 Q902.6 361.3 900.7 362.6 Q898.7 363.9 896.1 364.8 Q893.5 365.7 891.3 367.9 Q889.1 370.0 887.4 372.1 L885.7 374.3"/><path d="M885.7 374.3 L890.9 369.1 L887 379.5 L903 381.7 L925.6 383.9 L927.7 378.7"/><path d="M884.8 322.3 Q885.7 329.3 884.4 334.5 Q883.1 339.7 883.5 346.6 Q883.9 353.5 884.8 358.7 Q885.7 363.9 886.5 365.6 L887.4 367.4"/><path d="M887.2 323.5 Q888.2 331.0 887.4 335.5 L886.5 340.0"/><path d="M884.8 322.3 Q878.7 326.7 875.2 331.0 Q871.8 335.3 870.5 340.5 Q869.2 345.7 866.2 348.8 Q863.1 351.8 857.0 357.0 Q851.0 362.2 846.6 366.5 Q842.3 370.9 839.3 374.8 Q836.3 378.7 835.6 380.9 Q835.0 383.0 837.0 385.2 Q838.9 387.4 842.8 388.2 Q846.7 389.1 853.2 388.6 Q859.7 388.2 864.0 387.4 L868.3 386.5"/><path d="M868.3 386.5 Q874.4 390.0 877.5 389.8 Q880.5 389.5 882.6 391.1 L884.8 392.6"/><path d="M851.9 380.4 Q859.7 370.9 864.0 365.7 Q868.3 360.5 872.6 355.3 Q877.0 350.1 879.6 346.6 Q882.2 343.1 883.0 337.9 L883.9 332.7"/><path d="M879.5 333.5 L883.5 331"/><path d="M859.7 370.9 Q868.3 383.0 871.3 386.5 L874.4 390.0"/><path d="M861.4 369.1 Q871.8 365.7 876.1 363.9 Q880.5 362.2 882.6 362.4 L884.8 362.6"/><path d="M933.8 364.0 Q940.3 367.4 942.9 369.5 Q945.5 371.7 946.8 375.2 Q948.1 378.7 949.0 385.2 Q949.8 391.7 950.0 392.7 Q950.3 393.7 949.2 398.0 Q948.1 402.3 947.0 404.9 L945.9 407.5"/><path d="M945.9 407.5 Q946.4 419.7 947.2 426.2 Q948.1 432.7 948.5 441.4 Q949.0 450.0 950.3 455.6 Q951.6 461.3 953.3 464.1 Q955.0 466.9 955.6 470.4 Q956.3 473.9 954.8 476.5 Q953.3 479.1 951.1 480.8 Q949.0 482.5 947.2 480.8 L945.5 479.1"/><path d="M884.8 392.6 Q884.8 402.3 885.6 406.6 Q886.5 411.0 886.8 415.4 Q887.0 419.7 886.4 424.0 Q885.7 428.3 884.4 432.6 Q883.1 437.0 881.8 442.2 Q880.5 447.4 880.0 455.2 Q879.6 463.0 878.3 466.7 Q877.0 470.4 875.2 475.6 L873.5 480.8"/><path d="M929.9 403.2 L932.5 406.7 L945.9 408"/><path d="M929.9 403.2 Q925.6 414.5 924.3 418.8 Q923.0 423.1 925.6 427.5 Q928.2 431.8 932.1 439.6 Q936.0 447.4 939.0 453.9 Q942.0 460.4 942.9 464.5 Q943.8 468.7 944.6 473.9 L945.5 479.1"/><path d="M932.5 406.7 Q932.9 428.3 935.3 434.8 Q937.7 441.3 940.3 447.8 Q942.9 454.3 944.2 461.2 L945.5 468.2"/><path d="M931.5 407 L931.6 428"/><path d="M945.5 468.7 L945.9 476.5 M947.6 468.7 L947.7 476.5"/><path d="M873.5 480.8 Q885.7 486.0 892.2 487.5 Q898.7 489.0 904.4 489.6 Q910.0 490.3 916.0 489.6 Q922.1 489.0 929.0 486.6 Q936.0 484.3 940.8 481.7 L945.5 479.1"/><path d="M884.8 486.0 Q889.1 503.3 891.3 512.0 Q893.5 520.7 894.4 527.2 Q895.2 533.7 897.0 540.2 Q898.7 546.7 899.9 550.7 Q901.1 554.6 901.4 559.5 Q901.6 564.3 899.9 571.5 Q898.2 578.7 897.8 583.5 Q897.3 588.4 899.2 591.8 Q901.1 595.1 903.5 596.3 Q905.9 597.5 908.3 596.8 L910.7 596.1"/><path d="M908.7 490.3 Q908.7 512.0 908.9 520.6 Q909.1 529.3 908.7 538.0 L908.2 546.7"/><path d="M911.7 490.3 Q912.6 512.0 912.4 522.9 Q912.1 533.7 911.7 539.4 Q911.2 545.0 911.7 552.2 Q912.2 559.5 912.5 566.7 Q912.7 573.9 912.5 580.1 Q912.2 586.4 911.0 594.6 Q909.8 602.8 908.3 610.0 Q906.9 617.3 905.5 621.1 Q904.0 625.0 903.8 628.4 Q903.5 631.7 905.2 634.6 Q906.9 637.5 910.2 638.5 Q913.6 639.4 917.5 638.5 Q921.3 637.5 923.0 634.6 Q924.7 631.7 924.5 628.4 Q924.2 625.0 923.0 621.1 Q921.8 617.3 921.1 610.0 Q920.4 602.8 921.8 594.6 Q923.3 586.4 924.8 580.1 Q926.2 573.9 927.9 566.7 Q929.5 559.5 930.2 552.2 Q931.0 545.0 930.5 543.6 Q929.9 542.3 929.0 535.8 Q928.2 529.3 928.6 522.8 Q929.0 516.3 930.8 509.8 Q932.5 503.3 934.5 493.8 L936.4 484.3"/><path d="M897.8 525.9 Q901.3 528.5 903.5 527.2 L905.6 525.9"/><path d="M916.9 532.8 Q920.8 536.3 923.4 534.5 L926.0 532.8"/><path d="M901.1 554.6 Q905.9 556.1 908.3 555.4 L910.7 554.6"/><path d="M899.2 578.7 Q900.1 588.4 902.0 590.3 Q904.0 592.2 906.4 591.7 Q908.8 591.2 910.0 589.3 L911.2 587.4"/><path d="M912.7 586.4 L923.3 586.4"/><path d="M905.0 625.0 Q908.8 628.8 911.2 629.5 Q913.6 630.3 916.5 629.1 Q919.4 627.9 921.3 626.5 L923.3 625.0"/></g><g stroke="#19e6f0" stroke-opacity="0.62" stroke-width="1.35"><path d="M418.9 75V1017"/><path d="M629.0 75V1017"/><path d="M643.1 75V1017"/><path d="M657.5 75V1017"/><path d="M671.9 75V1017"/><path d="M686.0 75V1017"/><path d="M700.1 75V1017"/><path d="M714.5 75V1017"/><path d="M910.1 75V1017"/><path d="M59 158.5H1628"/><path d="M59 366.0H1628"/><path d="M59 402.0H1628"/><path d="M59 416.0H1628"/><path d="M59 433.0H1628"/><path d="M59 534.5H1628"/><path d="M59 635.3H1628"/><path d="M59 730.4H1628"/></g></svg>
<div style="left:10px;top:3.2px;width:16px;height:15px;background:#330000;border-radius:3px;"></div>
<div style="left:10px;top:3.4px;font-size:10.5px;line-height:15px;color:#ff9a1a;white-space:nowrap;font-weight:bold;width:16px;text-align:center;letter-spacing:-0.3px;">Ai</div>
<svg style="left:40px;top:2px" width="20" height="17" viewBox="0 0 20 17"><path d="M10 0.5 L0.6 9 L3.2 9 L3.2 16.5 L8 16.5 L8 11 L12 11 L12 16.5 L16.8 16.5 L16.8 9 L19.4 9 Z" fill="#d4d4d4"/></svg>
<div style="left:74px;top:0px;width:1px;height:20px;background:#5f5f5f;"></div>
<div style="left:91px;top:2px;font-size:13px;line-height:17px;color:#e6e6e6;white-space:nowrap;letter-spacing:-0.25px;-webkit-text-stroke:0.3px #e6e6e6;">File</div>
<div style="left:125px;top:2px;font-size:13px;line-height:17px;color:#e6e6e6;white-space:nowrap;letter-spacing:-0.25px;-webkit-text-stroke:0.3px #e6e6e6;">Edit</div>
<div style="left:161px;top:2px;font-size:13px;line-height:17px;color:#e6e6e6;white-space:nowrap;letter-spacing:-0.25px;-webkit-text-stroke:0.3px #e6e6e6;">Object</div>
<div style="left:212px;top:2px;font-size:13px;line-height:17px;color:#e6e6e6;white-space:nowrap;letter-spacing:-0.25px;-webkit-text-stroke:0.3px #e6e6e6;">Type</div>
<div style="left:253px;top:2px;font-size:13px;line-height:17px;color:#e6e6e6;white-space:nowrap;letter-spacing:-0.25px;-webkit-text-stroke:0.3px #e6e6e6;">Select</div>
<div style="left:301px;top:2px;font-size:13px;line-height:17px;color:#e6e6e6;white-space:nowrap;letter-spacing:-0.25px;-webkit-text-stroke:0.3px #e6e6e6;">Effect</div>
<div style="left:347px;top:2px;font-size:13px;line-height:17px;color:#e6e6e6;white-space:nowrap;letter-spacing:-0.25px;-webkit-text-stroke:0.3px #e6e6e6;">View</div>
<div style="left:387px;top:2px;font-size:13px;line-height:17px;color:#e6e6e6;white-space:nowrap;letter-spacing:-0.25px;-webkit-text-stroke:0.3px #e6e6e6;">Window</div>
<div style="left:447px;top:2px;font-size:13px;line-height:17px;color:#e6e6e6;white-space:nowrap;letter-spacing:-0.25px;-webkit-text-stroke:0.3px #e6e6e6;">Help</div>
<div style="left:485px;top:0px;width:1px;height:20px;background:#5c5c5c;"></div>
<div style="left:136px;top:19px;width:271px;height:20px;background:#ffffff;border:1px solid #e4e4e4;"></div>
<div style="left:140px;top:21px;font-size:12.1px;line-height:16px;color:#575757;white-space:nowrap;letter-spacing:-0.1px;">Annies Castle 1.ai* @ 215.75 % (CMYK/Preview)</div>
<div style="left:1641px;top:-3px;width:51px;height:25px;background:#1473e6;border-radius:12.5px;"></div>
<div style="left:1641px;top:2px;font-size:13px;line-height:17px;color:#ffffff;white-space:nowrap;width:51px;text-align:center;">Share</div>
<svg style="left:1702px;top:2px" width="19" height="18" viewBox="0 0 19 18"><circle cx="7.2" cy="7.2" r="5.6" fill="none" stroke="#e0e0e0" stroke-width="1.7"/><path d="M11.4 11.4L16.8 16.2" stroke="#e0e0e0" stroke-width="2.2" stroke-linecap="round"/></svg>
<div style="left:1735px;top:0px;width:1px;height:20px;background:#5f5f5f;"></div>
<svg style="left:1756px;top:5px" width="18" height="12" viewBox="0 0 18 12"><rect x="0" y="0" width="7.5" height="11.5" fill="#d2d2d2"/><rect x="8.8" y="0" width="9" height="5" fill="#d2d2d2"/><rect x="8.8" y="6.3" width="9" height="5.2" fill="#d2d2d2"/></svg>
<svg style="left:1792px;top:4px" width="17" height="14" viewBox="0 0 17 14"><rect x="0.8" y="0.8" width="15.4" height="12.4" fill="none" stroke="#d2d2d2" stroke-width="1.5"/><rect x="3" y="3.5" width="1.6" height="7" fill="#d2d2d2"/></svg>
<div style="left:1823.5px;top:-1px;width:86px;height:13.5px;border:1px solid #626262;"></div>
<div style="left:1852px;top:0px;width:1px;height:12px;background:#626262;"></div>
<div style="left:1880px;top:0px;width:1px;height:12px;background:#626262;"></div>
<div style="left:1832px;top:4.8px;width:10.4px;height:2.6px;background:#cfcfcf;"></div>
<div style="left:1861px;top:-3px;width:10.4px;height:10.6px;border:2px solid #cfcfcf;border-top-width:5.6px;"></div>
<svg style="left:1889.6px;top:0px" width="11" height="9" viewBox="0 0 11 9"><path d="M0.5 -2L10 8M10 -2L0.5 8" stroke="#cfcfcf" stroke-width="1.7"/></svg>
<div style="left:1911px;top:0px;width:5px;height:1038px;background:#505050;"></div>
<div style="left:1916px;top:0px;width:4px;height:1038px;background:#9fbcdc;"></div>
<svg style="left:0;top:0" width="42" height="640" viewBox="0 0 42 640"><path d="M15.3 65.6 L15.3 81.6 L19.8 76.8 L26.4 76.4 Z" fill="none" stroke="#cdcdcd" stroke-width="1.3" stroke-linejoin="miter"/><path d="M15 90.4 L15 107.2 L19.9 102.2 L27 101.6 Z" fill="#cdcdcd"/><path d="M30 108 L34 104 L34 108 Z" fill="#c8c8c8"/><g transform="translate(12,131) rotate(45)"><path d="M0 0 L-5.4 -9.2 L-3.6 -13.4 L3.6 -13.4 L5.4 -9.2 Z" fill="#cdcdcd"/><path d="M0 -0.5 L0 -7.5" stroke="#535353" stroke-width="1.1"/><circle cx="0" cy="-8.2" r="1.2" fill="#535353"/><rect x="-4" y="-20.6" width="8" height="6" rx="1" fill="#cdcdcd"/></g><path d="M30 132 L34 128 L34 132 Z" fill="#c8c8c8"/><g transform="translate(14.5,155.5) rotate(45)"><path d="M0 0 L-5.4 -9.2 L-3.6 -13.4 L3.6 -13.4 L5.4 -9.2 Z" fill="#cdcdcd"/><path d="M0 -0.5 L0 -7.5" stroke="#535353" stroke-width="1.1"/><circle cx="0" cy="-8.2" r="1.2" fill="#535353"/><rect x="-4" y="-20.6" width="8" height="6" rx="1" fill="#cdcdcd"/></g><path d="M12.8 154.5 C9.5 154.5 9.5 150 11 146.5 C12.2 143.6 13.5 141 11 141" fill="none" stroke="#cdcdcd" stroke-width="1.2"/><ellipse cx="20" cy="172" rx="9.2" ry="6.8" fill="#7a7a7a" stroke="#cdcdcd" stroke-width="1.2"/><path d="M30 182 L34 178 L34 182 Z" fill="#c8c8c8"/><g transform="translate(11.6,205.4) rotate(-45)"><path d="M0 0.8 C0.6 -1.6 3 -3.6 5.6 -3.6 C7.4 -3.6 8.6 -3 9 -2.6 L9 2.8 C8.4 3.6 7 4.2 5 4 C3 3.8 1.4 2.4 0 0.8 Z" fill="#cdcdcd"/><path d="M10.2 -2.4 L23.6 -1.2 Q24.8 0 23.6 1.2 L10.2 2.5 Z" fill="#cdcdcd"/></g><path d="M30 206 L34 202 L34 206 Z" fill="#c8c8c8"/><path d="M12.8 213.2 H27.2 V217.3 H26 L25.4 215 H21.2 V227.4 L23.6 227.9 V229 H16.4 V227.9 L18.8 227.4 V215 H14.6 L14 217.3 H12.8 Z" fill="#cdcdcd"/><path d="M30 231 L34 227 L34 231 Z" fill="#c8c8c8"/><path d="M16.3 240 C22 237.8 27.6 241.5 27.6 246.8 C27.6 248.5 27 250 26.2 251" fill="none" stroke="#cdcdcd" stroke-width="1.5"/><path d="M12 241.6 L17.8 237.4 L17.6 243.8 Z" fill="#cdcdcd"/><path d="M12.6 249.4 C14 253.4 18.4 255.3 22.6 254.2 C24 253.8 25.2 253 26 252" fill="none" stroke="#cdcdcd" stroke-width="1.4" stroke-dasharray="1 1.6"/><path d="M30 255 L34 251 L34 255 Z" fill="#c8c8c8"/><g transform="translate(19.8,270.6) rotate(45)"><rect x="-5.2" y="-8.6" width="10.4" height="11" fill="#cdcdcd"/><rect x="-4.6" y="3.4" width="9.2" height="4.6" fill="none" stroke="#cdcdcd" stroke-width="1.2"/></g><path d="M30 280 L34 276 L34 280 Z" fill="#c8c8c8"/><ellipse cx="17.6" cy="292.4" rx="6" ry="5.4" fill="none" stroke="#cdcdcd" stroke-width="1.3"/><ellipse cx="20.6" cy="295.8" rx="6" ry="5.4" fill="none" stroke="#cdcdcd" stroke-width="1.3"/><path d="M14.2 294H18.8" stroke="#cdcdcd" stroke-width="1.2" stroke-dasharray="1 0.9"/><path d="M23 292.4 L23 303.6 L26 300.8 L30.6 300.4 Z" fill="#cdcdcd" stroke="#535353" stroke-width="0.6"/><defs><linearGradient id="tg" x1="0" x2="1" y1="0" y2="0"><stop offset="0" stop-color="#2a2a2a"/><stop offset="1" stop-color="#d8d8d8"/></linearGradient></defs><rect x="12.6" y="313.4" width="15" height="13.6" fill="url(#tg)" stroke="#cdcdcd" stroke-width="1.2"/><path d="M30 330 L34 326 L34 330 Z" fill="#c8c8c8"/><g transform="translate(20,344.5) rotate(-40)" stroke="#cdcdcd" fill="none"><path d="M-8.5 -4V4M8.5 -4V4" stroke-width="1.4"/><path d="M-5 0H5" stroke-width="1.6"/><path d="M-3.4 -2.8L-7 0L-3.4 2.8ZM3.4 -2.8L7 0L3.4 2.8Z" stroke-width="0.6" fill="#cdcdcd"/></g><path d="M16 341.4H18.4" stroke="#cdcdcd" stroke-width="1.1"/><g transform="translate(12,378.2) rotate(-45)"><path d="M0.6 0 Q-0.6 0 0 -1 L1 -1.4 L12 -1.7 L12 1.7 L1 1.4 Z" fill="#535353" stroke="#cdcdcd" stroke-width="1.2"/><rect x="11.6" y="-3.2" width="2.4" height="6.4" fill="#cdcdcd"/><path d="M14.4 -1.9 H18.5 Q20.8 -1.9 20.8 0 Q20.8 1.9 18.5 1.9 H14.4 Z" fill="#cdcdcd"/></g><path d="M13.6 389.6 C12.6 388 14.4 386.8 15.4 388 C18 391 17.8 394 20.2 395 C22.6 396 24.4 393.4 26 392.8 C28.6 391.8 29.8 394.2 29.2 396.4 L28 396 C28 394.6 27 394.2 26 395 C23.8 396.8 22.6 399.4 19.6 399 C17 398.6 16.4 396.8 15.8 395.6 Z" fill="#cdcdcd"/><path d="M12.4 401.6 L22.4 389.6" stroke="#cdcdcd" stroke-width="1.1"/><circle cx="12.2" cy="402" r="1.5" fill="#535353" stroke="#cdcdcd" stroke-width="1"/><circle cx="22.6" cy="389.2" r="1.3" fill="#535353" stroke="#cdcdcd" stroke-width="1"/><circle cx="17.4" cy="395.6" r="1.3" fill="#535353" stroke="#cdcdcd" stroke-width="1"/><rect x="11" y="412" width="8" height="8" fill="#cdcdcd"/><circle cx="19.6" cy="418.8" r="4.2" fill="#8a8a8a" stroke="#cdcdcd" stroke-width="1.2"/><circle cx="25.2" cy="422.4" r="4" fill="#6b6b6b" stroke="#cdcdcd" stroke-width="1.3"/><path d="M15.3 434.4V441.6M10 439.8H17" stroke="#cdcdcd" stroke-width="1.1"/><path d="M15.6 440.4 H23.2 L26.8 444 V450.6 H15.6 Z" fill="#777" stroke="#cdcdcd" stroke-width="1.2"/><path d="M23 440.6 V444.2 H26.6" fill="none" stroke="#cdcdcd" stroke-width="1"/><rect x="6" y="457.5" width="28" height="22.5" fill="#383838"/><circle cx="18.2" cy="466.6" r="5.9" fill="none" stroke="#dcdcdc" stroke-width="1.4"/><path d="M22.6 471 L29.4 477.4" stroke="#dcdcdc" stroke-width="2" stroke-linecap="round"/><path d="M29.4 479.4 L33.4 475.4 L33.4 479.4 Z" fill="#c8c8c8"/><rect x="8.6" y="492.4" width="6.4" height="6.4" fill="#111" stroke="#f0f0f0" stroke-width="1.2"/><rect x="6" y="489.6" width="6.6" height="6.6" fill="#ffffff" stroke="#1a1a1a" stroke-width="0.8"/><path d="M27.6 490.8 C31.8 490 33.6 493 33.2 496" fill="none" stroke="#cdcdcd" stroke-width="1.8"/><path d="M26 491.2 L29.4 488.2 L29.6 494 Z" fill="#cdcdcd"/><path d="M30.6 495.6 L35.8 495.4 L33.4 499.4 Z" fill="#cdcdcd"/><rect x="6" y="507" width="18.6" height="18.6" fill="#ffffff"/><path d="M6.4 525.2 L24.2 507.4" stroke="#e8131d" stroke-width="2.2"/><rect x="16" y="517.4" width="19" height="19" fill="#ffffff"/><rect x="17.3" y="518.7" width="16.4" height="16.4" fill="#000000"/><rect x="20.4" y="521.8" width="10.2" height="10.2" fill="#ffffff"/><rect x="21.6" y="523" width="7.8" height="7.8" fill="#4e4e4e"/><defs><linearGradient id="tg2" x1="0" x2="1"><stop offset="0" stop-color="#ffffff"/><stop offset="1" stop-color="#222"/></linearGradient></defs><rect x="6" y="544.6" width="9.4" height="9.4" fill="#000"/><rect x="8.4" y="547" width="4.4" height="4.4" fill="#555"/><rect x="15.6" y="544.6" width="9.2" height="9.4" fill="url(#tg2)"/><rect x="25" y="544.6" width="9.4" height="9.4" fill="#ffffff"/><path d="M25.4 553.6 L34 545" stroke="#e8131d" stroke-width="1.8"/><circle cx="18.6" cy="565.6" r="3.8" fill="none" stroke="#cdcdcd" stroke-width="1.2"/><rect x="19" y="566.4" width="6.2" height="6.2" fill="#cdcdcd" stroke="#535353" stroke-width="0.7"/><rect x="11.4" y="591.2" width="11" height="8.4" fill="#6a6a6a" stroke="#cdcdcd" stroke-width="1.2"/><rect x="17.4" y="587.6" width="11.4" height="9" fill="#777" stroke="#cdcdcd" stroke-width="1.2"/><path d="M17.4 588.6H28.8M11.4 592.2H17" stroke="#cdcdcd" stroke-width="1.6"/><circle cx="14.4" cy="627" r="1.9" fill="#cdcdcd"/><circle cx="20" cy="627" r="1.9" fill="#cdcdcd"/><circle cx="25.6" cy="627" r="1.9" fill="#cdcdcd"/></svg>
<div style="left:46px;top:1018px;width:52px;height:16px;background:#454545;"></div>
<div style="left:49px;top:1019.8px;font-size:11px;line-height:15px;color:#eaeaea;white-space:nowrap;transform:scaleX(0.94);transform-origin:0 50%;">215.75%</div>
<div style="left:98px;top:1018px;width:18px;height:16px;background:#4c4c4c;border-left:1px solid #5a5a5a;"></div>
<svg style="left:103px;top:1024px" width="8" height="5.7" viewBox="0 0 8 5.7"><path d="M0.8 0.8 L4.0 4.2 L7.2 0.8" fill="none" stroke="#e0e0e0" stroke-width="1.5" stroke-linecap="round" stroke-linejoin="round"/></svg>
<div style="left:120px;top:1018px;width:54px;height:16px;background:#454545;"></div>
<div style="left:124px;top:1019.8px;font-size:11px;line-height:15px;color:#eaeaea;white-space:nowrap;">0°</div>
<div style="left:174px;top:1018px;width:18px;height:16px;background:#4c4c4c;border-left:1px solid #5a5a5a;"></div>
<svg style="left:178px;top:1024px" width="8" height="5.7" viewBox="0 0 8 5.7"><path d="M0.8 0.8 L4.0 4.2 L7.2 0.8" fill="none" stroke="#e0e0e0" stroke-width="1.5" stroke-linecap="round" stroke-linejoin="round"/></svg>
<svg style="left:196px;top:1018px" width="40" height="16" viewBox="0 0 40 16"><rect x="6" y="4" width="1.6" height="8" fill="#777"/><path d="M13.6 4 L8.2 8 L13.6 12 Z" fill="#777"/><path d="M30 4 L24.6 8 L30 12 Z" fill="#777"/></svg>
<div style="left:235px;top:1018px;width:42px;height:16px;background:#454545;"></div>
<div style="left:238px;top:1019.8px;font-size:11px;line-height:15px;color:#eaeaea;white-space:nowrap;">1</div>
<div style="left:277px;top:1018px;width:19px;height:16px;background:#4c4c4c;border-left:1px solid #5a5a5a;"></div>
<svg style="left:282px;top:1024px" width="8" height="5.7" viewBox="0 0 8 5.7"><path d="M0.8 0.8 L4.0 4.2 L7.2 0.8" fill="none" stroke="#e0e0e0" stroke-width="1.5" stroke-linecap="round" stroke-linejoin="round"/></svg>
<svg style="left:296px;top:1018px" width="44" height="16" viewBox="0 0 44 16"><path d="M9.6 4 L15 8 L9.6 12 Z" fill="#777"/><path d="M25 4 L30.4 8 L25 12 Z" fill="#777"/><rect x="31" y="4" width="1.6" height="8" fill="#777"/></svg>
<div style="left:340px;top:1018px;width:1px;height:16px;background:#4a4a4a;"></div>
<div style="left:341px;top:1019.8px;font-size:10px;line-height:15px;color:#cfcfcf;white-space:nowrap;width:200px;text-align:center;">Selection</div>
<svg style="left:551px;top:1020px" width="7" height="11" viewBox="0 0 7 11"><path d="M0.5 0.5 L6.2 5.5 L0.5 10.5 Z" fill="#d6d6d6"/></svg>
<div style="left:562px;top:1018px;width:1px;height:16px;background:#4a4a4a;"></div>
<div style="left:563px;top:1017px;width:1065px;height:17px;background:#4c4c4c;"></div>
<svg style="left:568px;top:1020px" width="7" height="11" viewBox="0 0 7 11"><path d="M5.5 1L1.5 5.5L5.5 10" fill="none" stroke="#a8a8a8" stroke-width="1.3"/></svg>
<svg style="left:1616px;top:1020px" width="7" height="11" viewBox="0 0 7 11"><path d="M1.5 1L5.5 5.5L1.5 10" fill="none" stroke="#a8a8a8" stroke-width="1.3"/></svg>
<div style="left:1080px;top:1018px;width:26px;height:15px;background:#646464;border-radius:7.5px;"></div>
<div style="left:1628px;top:1017px;width:17px;height:17px;background:#535353;"></div>
<div style="left:1648px;top:29px;width:263px;height:12px;background:#424242;"></div>
<svg style="left:1898.5px;top:32px" width="8" height="6" viewBox="0 0 8 6"><path d="M0.7 0.7L3 3L0.7 5.3M4.4 0.7L6.7 3L4.4 5.3" fill="none" stroke="#c8c8c8" stroke-width="1"/></svg>
<div style="left:1648px;top:41px;width:263px;height:27px;background:#424242;"></div>
<div style="left:1648px;top:41px;width:66px;height:27px;background:#535353;"></div>
<div style="left:1714px;top:41px;width:1px;height:27px;background:#383838;"></div>
<div style="left:1752px;top:41px;width:1px;height:27px;background:#383838;"></div>
<div style="left:1657px;top:47.5px;font-size:10.6px;line-height:14px;color:#f2f2f2;white-space:nowrap;font-weight:bold;">Navigator</div>
<div style="left:1724px;top:47.5px;font-size:10.6px;line-height:14px;color:#a6a6a6;white-space:nowrap;font-weight:bold;">Info</div>
<svg style="left:1894px;top:50px" width="11" height="9" viewBox="0 0 11 9"><path d="M0 1H11M0 4.5H11M0 8H11" stroke="#c4c4c4" stroke-width="1.4"/></svg>
<div style="left:1648px;top:68px;width:263px;height:196px;background:#535353;"></div>
<div style="left:1677px;top:70px;width:234px;height:167px;background:#ffffff;"></div>
<svg style="left:0;top:0" width="1920" height="240" viewBox="0 0 1920 240"><rect x="1683.5" y="75.5" width="222" height="156" fill="#fff" stroke="#6a6a6a" stroke-width="1"/><path d="M1905.5 76V231.5H1684" fill="none" stroke="#3c3c3c" stroke-width="1"/><g fill="none" stroke="#a2a2a2" stroke-width="0.75"><path d="M1760.2 143.3V109.3H1763.5V114H1766.8V109.3H1770.1V114H1773.4V109.3H1776.7V143.3" /><circle cx="1765.2" cy="119.6" r="1.5"/><circle cx="1771.8" cy="119.6" r="1.5"/><path d="M1768.5 124.5V135M1766.5 129.6H1770.5"/><path d="M1812.4 143.3V109.3H1815.7V114H1819.0V109.3H1822.3V114H1825.6V109.3H1828.9V143.3" /><circle cx="1817.4" cy="119.6" r="1.5"/><circle cx="1824.0" cy="119.6" r="1.5"/><path d="M1820.7 124.5V135M1818.7 129.6H1822.7"/><path d="M1776 121.4H1812"/><rect x="1729.4" y="143.5" width="130" height="10.9" stroke="#c0c0c0"/></g><g fill="none" stroke="#6e6e6e" stroke-width="0.7"><path d="M1790.5 110.5 L1792.5 108.3 L1794.6 108.6 L1796 110.8 L1796.3 113.6 L1797.2 115.4 L1797.2 121.5 L1796.4 125.3 L1796 127.6 L1794.3 128.6 L1794.6 133 L1793.8 137.5 L1794.2 141.5 L1792.8 143.3 L1791.8 141.6 L1792.6 136 L1791.6 133.4 L1791.8 128.6 L1789.8 127.8 L1790.6 122.4 L1790.8 116.6 L1789.2 116.2 L1786.4 115.4 L1786.2 113.8 Z"/><path d="M1791.6 109.6 L1792.6 112.4 L1794.4 111.4 M1795.4 118.6 L1795.2 124"/></g><rect x="1698" y="79.2" width="176" height="105.8" fill="none" stroke="#e73c43" stroke-width="2"/></svg>
<svg style="left:1656px;top:249px" width="12" height="7" viewBox="0 0 12 7"><path d="M0 6.5 L0.4 5 L3 3.6 L4.4 4.4 L6.6 0.6 L8.8 3.6 L11.4 5 L12 6.5 Z" fill="#cfcfcf"/></svg>
<div style="left:1678px;top:243px;width:52px;height:19px;background:#454545;border:1px solid #4e4e4e;"></div>
<div style="left:1681px;top:245.5px;font-size:11px;line-height:14px;color:#ededed;white-space:nowrap;transform:scaleX(0.93);transform-origin:0 50%;">215.75%</div>
<div style="left:1730px;top:243px;width:18px;height:19px;background:#4f4f4f;border:1px solid #5c5c5c;border-left:0;"></div>
<svg style="left:1734.4px;top:250px" width="8" height="5.9" viewBox="0 0 8 5.9"><path d="M0.8 0.8 L4.0 4.4 L7.2 0.8" fill="none" stroke="#e4e4e4" stroke-width="1.5" stroke-linecap="round" stroke-linejoin="round"/></svg>
<svg style="left:1756px;top:247px" width="18" height="9" viewBox="0 0 18 9"><path d="M0 8.6 L4.6 2.2 L6 4 L9.6 0 L17.6 8.6 Z" fill="#cfcfcf"/><path d="M5.4 4.6L3 8.6" stroke="#535353" stroke-width="0.9"/></svg>
<div style="left:1648px;top:266px;width:263px;height:28px;background:#424242;"></div>
<div style="left:1671px;top:266px;width:66px;height:28px;background:#535353;"></div>
<div style="left:1670px;top:266px;width:1px;height:28px;background:#383838;"></div>
<div style="left:1759px;top:266px;width:1px;height:28px;background:#383838;"></div>
<div style="left:1781px;top:266px;width:1px;height:28px;background:#383838;"></div>
<div style="left:1803px;top:266px;width:1px;height:28px;background:#383838;"></div>
<div style="left:1825px;top:266px;width:1px;height:28px;background:#383838;"></div>
<div style="left:1846px;top:266px;width:1px;height:28px;background:#383838;"></div>
<div style="left:1870px;top:266px;width:1px;height:28px;background:#383838;"></div>
<div style="left:1657.5px;top:273.6px;font-size:10.2px;line-height:14px;color:#a9a9a9;white-space:nowrap;font-weight:bold;width:12.5px;overflow:hidden;">Lit</div>
<div style="left:1679.7px;top:273.9px;font-size:10.1px;line-height:14px;color:#f4f4f4;white-space:nowrap;font-weight:bold;">Properties</div>
<div style="left:1747px;top:273.6px;font-size:10.2px;line-height:14px;color:#a9a9a9;white-space:nowrap;font-weight:bold;width:11.5px;overflow:hidden;">Tra</div>
<div style="left:1768.5px;top:273.6px;font-size:10.2px;line-height:14px;color:#a9a9a9;white-space:nowrap;font-weight:bold;width:11.5px;overflow:hidden;">Str</div>
<div style="left:1790.5px;top:273.6px;font-size:10.2px;line-height:14px;color:#a9a9a9;white-space:nowrap;font-weight:bold;width:12px;overflow:hidden;">Lay</div>
<div style="left:1811.5px;top:273.6px;font-size:10.2px;line-height:14px;color:#a9a9a9;white-space:nowrap;font-weight:bold;width:13px;overflow:hidden;">Sw</div>
<div style="left:1834px;top:273.6px;font-size:10.2px;line-height:14px;color:#a9a9a9;white-space:nowrap;font-weight:bold;width:11.5px;overflow:hidden;">Bru</div>
<div style="left:1855.5px;top:273.6px;font-size:10.2px;line-height:14px;color:#a9a9a9;white-space:nowrap;font-weight:bold;width:14.5px;overflow:hidden;">Syr</div>
<svg style="left:1894px;top:276.5px" width="11" height="9" viewBox="0 0 11 9"><path d="M0 1H11M0 4.5H11M0 8H11" stroke="#c4c4c4" stroke-width="1.4"/></svg>
<div style="left:1648px;top:294px;width:263px;height:537.3px;background:#535353;"></div>
<div style="left:1894px;top:294px;width:10px;height:537.3px;background:#4f4f4f;"></div>
<svg style="left:1894.5px;top:298.5px" width="8" height="5.7" viewBox="0 0 8 5.7"><path d="M0.8 4.2 L4.0 0.8 L7.2 4.2" fill="none" stroke="#bdbdbd" stroke-width="1.3" stroke-linecap="round" stroke-linejoin="round"/></svg>
<div style="left:1894px;top:308px;width:10px;height:264px;background:#5f5f5f;border-radius:5px;"></div>
<div style="left:1893px;top:294px;width:1px;height:537.3px;background:#4d4d4d;"></div>
<div style="left:1658px;top:306.3px;font-size:10.2px;line-height:14px;color:#d4d4d4;white-space:nowrap;">No Selection</div>
<div style="left:1648px;top:325px;width:245px;height:1px;background:#494949;"></div>
<div style="left:1658px;top:347.8px;font-size:10.2px;line-height:14px;color:#d4d4d4;white-space:nowrap;">Transform</div>
<svg style="left:0;top:0" width="1920" height="410" viewBox="0 0 1920 410"><rect x="1658.2" y="381.6" width="4.4" height="4.4" fill="none" stroke="#c8c8c8" stroke-width="0.9"/><rect x="1658.2" y="389.0" width="4.4" height="4.4" fill="none" stroke="#c8c8c8" stroke-width="0.9"/><rect x="1658.2" y="396.4" width="4.4" height="4.4" fill="none" stroke="#c8c8c8" stroke-width="0.9"/><rect x="1665.6" y="381.6" width="4.4" height="4.4" fill="none" stroke="#c8c8c8" stroke-width="0.9"/><rect x="1665.6" y="389.0" width="4.4" height="4.4" fill="#e8e8e8" stroke="#c8c8c8" stroke-width="0.9"/><rect x="1665.6" y="396.4" width="4.4" height="4.4" fill="none" stroke="#c8c8c8" stroke-width="0.9"/><rect x="1673.0" y="381.6" width="4.4" height="4.4" fill="none" stroke="#c8c8c8" stroke-width="0.9"/><rect x="1673.0" y="389.0" width="4.4" height="4.4" fill="none" stroke="#c8c8c8" stroke-width="0.9"/><rect x="1673.0" y="396.4" width="4.4" height="4.4" fill="none" stroke="#c8c8c8" stroke-width="0.9"/><path d="M1662.6 383.8H1665.6M1670 383.8H1673M1662.6 398.6H1665.6M1670 398.6H1673M1660.4 386V389M1660.4 393.4V396.4M1675.2 386V389M1675.2 393.4V396.4" stroke="#c8c8c8" stroke-width="0.9"/></svg>
<div style="left:1689px;top:371.8px;font-size:10.4px;line-height:14px;color:#d4d4d4;white-space:nowrap;">X:</div>
<div style="left:1703px;top:367px;width:58px;height:20px;background:#585858;border:1px solid #5a5a5a;"></div>
<div style="left:1708px;top:370.8px;font-size:10.2px;line-height:14px;color:#7a7a7a;white-space:nowrap;">0 mm</div>
<div style="left:1777px;top:371.8px;font-size:10.4px;line-height:14px;color:#d4d4d4;white-space:nowrap;">W:</div>
<div style="left:1795px;top:367px;width:58px;height:20px;background:#585858;border:1px solid #5a5a5a;"></div>
<div style="left:1800px;top:370.8px;font-size:10.2px;line-height:14px;color:#7a7a7a;white-space:nowrap;">0 mm</div>
<div style="left:1689px;top:398.8px;font-size:10.4px;line-height:14px;color:#d4d4d4;white-space:nowrap;">Y:</div>
<div style="left:1703px;top:394px;width:58px;height:20px;background:#585858;border:1px solid #5a5a5a;"></div>
<div style="left:1708px;top:397.8px;font-size:10.2px;line-height:14px;color:#7a7a7a;white-space:nowrap;">0 mm</div>
<div style="left:1777px;top:398.8px;font-size:10.4px;line-height:14px;color:#d4d4d4;white-space:nowrap;">H:</div>
<div style="left:1795px;top:394px;width:58px;height:20px;background:#585858;border:1px solid #5a5a5a;"></div>
<div style="left:1800px;top:397.8px;font-size:10.2px;line-height:14px;color:#7a7a7a;white-space:nowrap;">0 mm</div>
<svg style="left:1684px;top:423px" width="15" height="11" viewBox="0 0 15 11"><path d="M8.6 1 L1 9.6 H11" fill="none" stroke="#c8c8c8" stroke-width="1.3"/><path d="M4.8 5.4 Q7.6 6.6 7.4 9.6" fill="none" stroke="#c8c8c8" stroke-width="1"/><circle cx="13.2" cy="5.4" r="0.8" fill="#c8c8c8"/><circle cx="13.2" cy="9.2" r="0.8" fill="#c8c8c8"/></svg>
<div style="left:1702px;top:421px;width:57px;height:20px;background:#585858;border:1px solid #5a5a5a;"></div>
<div style="left:1706px;top:424.8px;font-size:10.2px;line-height:14px;color:#6e6e6e;white-space:nowrap;">0°</div>
<svg style="left:1744px;top:429px" width="8" height="5.7" viewBox="0 0 8 5.7"><path d="M0.8 0.8 L4.0 4.2 L7.2 0.8" fill="none" stroke="#6e6e6e" stroke-width="1.3" stroke-linecap="round" stroke-linejoin="round"/></svg>
<svg style="left:1801.5px;top:426.5px" width="15" height="12" viewBox="0 0 16 13"><path d="M1 1.6 L6 6.5 L1 11.4 Z" fill="none" stroke="#d2d2d2" stroke-width="1.2"/><path d="M15 1.6 L10 6.5 L15 11.4 Z" fill="#d2d2d2"/><path d="M8 0V13" stroke="#d2d2d2" stroke-width="1" stroke-dasharray="1.6 1.2"/></svg>
<svg style="left:1827px;top:424px" width="13" height="16" viewBox="0 0 13 16"><path d="M1.6 1 L6.5 6 L11.4 1 Z" fill="#d2d2d2"/><path d="M1.6 15 L6.5 10 L11.4 15 Z" fill="none" stroke="#d2d2d2" stroke-width="1.2"/><path d="M0 8H13" stroke="#d2d2d2" stroke-width="1" stroke-dasharray="1.6 1.2"/></svg>
<svg style="left:1866px;top:382px" width="19" height="20" viewBox="0 0 19 20"><path d="M6.6 8.6 V5.8 Q6.6 2.6 9.6 2.6 Q12.6 2.6 12.6 5.8 V7.2 M12.6 11.4 V14.2 Q12.6 17.4 9.6 17.4 Q6.6 17.4 6.6 14.2 V12.6" fill="none" stroke="#d2d2d2" stroke-width="1.7"/><path d="M2.4 2 L16.6 16.4" stroke="#d2d2d2" stroke-width="1.5"/></svg>
<div style="left:1871.5px;top:451.3px;width:3.4px;height:3.4px;background:#cfcfcf;border-radius:2px;"></div><div style="left:1876.5px;top:451.3px;width:3.4px;height:3.4px;background:#cfcfcf;border-radius:2px;"></div><div style="left:1881.5px;top:451.3px;width:3.4px;height:3.4px;background:#cfcfcf;border-radius:2px;"></div>
<div style="left:1648px;top:460px;width:245px;height:1px;background:#494949;"></div>
<svg style="left:1662px;top:487.5px" width="10" height="6.9" viewBox="0 0 10 6.9"><path d="M0.8 0.8 L5.0 5.4 L9.2 0.8" fill="none" stroke="#e2e2e2" stroke-width="1.8" stroke-linecap="round" stroke-linejoin="round"/></svg>
<div style="left:1683px;top:483.8px;font-size:10.2px;line-height:14px;color:#d4d4d4;white-space:nowrap;">Text to Vector Graphic (Beta)</div>
<div style="left:1658px;top:512.3px;font-size:10.2px;line-height:14px;color:#d4d4d4;white-space:nowrap;">Type</div>
<div style="left:1658px;top:532px;width:228px;height:28px;background:#4a4a4a;border:1px solid #5c5c5c;"></div>
<svg style="left:1662px;top:538px" width="17" height="17" viewBox="-8.5 -8.5 17 17"><ellipse cx="0" cy="-4.6" rx="1.9" ry="3.4" transform="rotate(20)" fill="#d8d8d8"/><ellipse cx="0" cy="-4.6" rx="1.9" ry="3.4" transform="rotate(92)" fill="#d8d8d8"/><ellipse cx="0" cy="-4.6" rx="1.9" ry="3.4" transform="rotate(164)" fill="#d8d8d8"/><ellipse cx="0" cy="-4.6" rx="1.9" ry="3.4" transform="rotate(236)" fill="#d8d8d8"/><ellipse cx="0" cy="-4.6" rx="1.9" ry="3.4" transform="rotate(308)" fill="#d8d8d8"/><path d="M0 0L6.4 6.6" stroke="#d8d8d8" stroke-width="1.3"/></svg>
<div style="left:1689px;top:539.8px;font-size:10.2px;line-height:14px;color:#ececec;white-space:nowrap;">Subject</div>
<svg style="left:1872px;top:543.5px" width="8" height="5.9" viewBox="0 0 8 5.9"><path d="M0.8 0.8 L4.0 4.4 L7.2 0.8" fill="none" stroke="#e4e4e4" stroke-width="1.5" stroke-linecap="round" stroke-linejoin="round"/></svg>
<div style="left:1659px;top:567px;width:226.5px;height:215px;background:#323232;"></div>
<svg style="left:1668px;top:578px" width="12" height="12" viewBox="-6 -6 12 12"><circle cx="0" cy="0" r="3.7" fill="#d6d6d6"/><rect x="-1.2" y="-5.6" width="2.4" height="11.2" fill="#d6d6d6" transform="rotate(0)"/><rect x="-1.2" y="-5.6" width="2.4" height="11.2" fill="#d6d6d6" transform="rotate(45)"/><rect x="-1.2" y="-5.6" width="2.4" height="11.2" fill="#d6d6d6" transform="rotate(90)"/><rect x="-1.2" y="-5.6" width="2.4" height="11.2" fill="#d6d6d6" transform="rotate(135)"/><circle cx="0" cy="0" r="1.7" fill="#323232"/></svg>
<div style="left:1687px;top:578.3px;font-size:11.1px;line-height:14px;color:#dedede;white-space:nowrap;">Styles &amp; Settings</div>
<svg style="left:1863px;top:581px" width="9" height="6" viewBox="0 0 9 6"><path d="M0.4 0.4H8.6L4.5 5.6Z" fill="#dcdcdc"/></svg>
<div style="left:1668px;top:606.5px;width:208px;height:2px;background:#4a4a4a;border-radius:1px;"></div>
<div style="left:1668px;top:623px;width:208px;height:26px;background:#4b4b4b;border:1px solid #5b5b5b;border-radius:2px;"></div>
<svg style="left:1698px;top:627px" width="18" height="18" viewBox="0 0 18 18"><path d="M1.6 1.4 L7.4 7.6" stroke="#d6d6d6" stroke-width="2.2" stroke-linecap="round"/><path d="M0.8 4.2 L4.2 0.8" stroke="#d6d6d6" stroke-width="1.3"/><circle cx="9.6" cy="12" r="4.6" fill="#d6d6d6"/><path d="M7.6 4.8 Q15.6 3.6 15.8 11.4" fill="none" stroke="#d6d6d6" stroke-width="1.1"/></svg>
<div style="left:1720.5px;top:630.3px;font-size:10.2px;line-height:14px;color:#ececec;white-space:nowrap;">Pick styles from a reference</div>
<div style="left:1669px;top:665px;width:13px;height:13px;background:#d2d2d2;border-radius:2px;"></div>
<svg style="left:1670.5px;top:667.5px" width="10" height="8" viewBox="0 0 10 8"><path d="M1 4 L3.8 6.8 L9 1" fill="none" stroke="#333" stroke-width="1.7"/></svg>
<div style="left:1689px;top:666.3px;font-size:10.2px;line-height:14px;color:#e2e2e2;white-space:nowrap;">Match active artboard style</div>
<div style="left:1668px;top:696px;width:208px;height:2px;background:#4a4a4a;border-radius:1px;"></div>
<div style="left:1668px;top:715.8px;font-size:10.2px;line-height:14px;color:#e2e2e2;white-space:nowrap;">Detail in vector graphics</div>
<div style="left:1668px;top:742px;width:208px;height:2px;background:#5e5e5e;border-radius:1px;"></div>
<div style="left:1766px;top:737px;width:12px;height:12px;background:#323232;border:2px solid #e6e6e6;border-radius:6px;"></div>
<div style="left:1668px;top:750.8px;font-size:10.2px;line-height:14px;color:#e2e2e2;white-space:nowrap;">Minimal</div>
<div style="left:1776px;top:750.8px;font-size:10.2px;line-height:14px;color:#e2e2e2;white-space:nowrap;width:100px;text-align:right;">Complex</div>
<div style="left:1658px;top:790.8px;font-size:10.2px;line-height:14px;color:#d4d4d4;white-space:nowrap;">Prompt</div>
<div style="left:1658px;top:811.5px;width:228px;height:19.8px;background:#464646;border:1px solid #525252;border-bottom:0;"></div>
<div style="left:1663px;top:812.8px;font-size:10.2px;line-height:14px;color:#f0f0f0;white-space:nowrap;">colorful space ship, rocket</div>
<svg style="left:1866px;top:828px" width="7" height="4.9" viewBox="0 0 7 4.9"><path d="M0.8 0.8 L3.5 3.4 L6.2 0.8" fill="none" stroke="#e4e4e4" stroke-width="1.4" stroke-linecap="round" stroke-linejoin="round"/></svg>
<div style="left:1648px;top:833.5px;width:263px;height:27.8px;background:#424242;"></div>
<div style="left:1648px;top:833.5px;width:51.5px;height:27.8px;background:#535353;"></div>
<div style="left:1699.5px;top:833.5px;width:1px;height:27.8px;background:#383838;"></div>
<div style="left:1775px;top:833.5px;width:1px;height:27.8px;background:#383838;"></div>
<svg style="left:1652.5px;top:843px" width="5" height="9" viewBox="0 0 5 9"><path d="M0.6 3L2.5 0.8L4.4 3M0.6 6L2.5 8.2L4.4 6" fill="none" stroke="#b0b0b0" stroke-width="0.9"/></svg>
<div style="left:1663.7px;top:840.8px;font-size:10.1px;line-height:14px;color:#f4f4f4;white-space:nowrap;font-weight:bold;">Color</div>
<div style="left:1709px;top:840.8px;font-size:10px;line-height:14px;color:#a9a9a9;white-space:nowrap;font-weight:bold;">Color Guide</div>
<svg style="left:1894px;top:843.5px" width="11" height="9" viewBox="0 0 11 9"><path d="M0 1H11M0 4.5H11M0 8H11" stroke="#c4c4c4" stroke-width="1.4"/></svg>
<div style="left:1648px;top:861px;width:263px;height:173px;background:#535353;"></div>
<svg style="left:0;top:0" width="1920" height="1038" viewBox="0 0 1920 1038"><rect x="1656.6" y="871.6" width="6.8" height="6.8" fill="#111" stroke="#f0f0f0" stroke-width="1.3"/><rect x="1653.6" y="868.6" width="6.8" height="6.8" fill="#fff" stroke="#1a1a1a" stroke-width="0.8"/><path d="M1676.4 871.4 C1681.2 870.4 1683 873.6 1682.6 876.6" fill="none" stroke="#d4d4d4" stroke-width="2.2"/><path d="M1674.2 871.8 L1678.4 868.2 L1678.6 875 Z" fill="#d4d4d4"/><path d="M1679.6 876.2 L1685.8 876 L1682.8 880.6 Z" fill="#d4d4d4"/><rect x="1654" y="888" width="19" height="19" fill="#fff"/><path d="M1654.4 906.6 L1672.6 888.4" stroke="#e8131d" stroke-width="2.2"/><rect x="1664" y="897.6" width="19.4" height="19.4" fill="#fff"/><rect x="1665.3" y="898.9" width="16.8" height="16.8" fill="#000"/><rect x="1668.5" y="902.1" width="10.4" height="10.4" fill="#fff"/><rect x="1669.7" y="903.3" width="8" height="8" fill="#4e4e4e"/><path d="M1664.4 933.4 L1669.6 936 L1669.6 942 L1664.4 944.8 L1659.2 942 L1659.2 936 Z M1659.2 936 L1664.4 938.8 L1669.6 936 M1664.4 938.8 V944.8" fill="none" stroke="#b2b2b2" stroke-width="1.2"/><rect x="1678.5" y="932.5" width="13.4" height="13.4" fill="#444" stroke="#e6e6e6" stroke-width="1.2"/><defs><linearGradient id="gc"><stop offset="0" stop-color="#231f20"/><stop offset="1" stop-color="#04182f"/></linearGradient><linearGradient id="gm"><stop offset="0" stop-color="#231f20"/><stop offset="1" stop-color="#2e0404"/></linearGradient><linearGradient id="gy"><stop offset="0" stop-color="#231f20"/><stop offset="1" stop-color="#212106"/></linearGradient><linearGradient id="gk"><stop offset="0" stop-color="#ffffff"/><stop offset="1" stop-color="#231f20"/></linearGradient><linearGradient id="spec" x1="0" x2="1" y1="0" y2="0"><stop offset="0" stop-color="#ee1c24"/><stop offset="0.155" stop-color="#fff200"/><stop offset="0.27" stop-color="#7cc242"/><stop offset="0.38" stop-color="#2fa64a"/><stop offset="0.52" stop-color="#27baec"/><stop offset="0.64" stop-color="#2f3896"/><stop offset="0.80" stop-color="#a04fae"/><stop offset="0.92" stop-color="#ec0c8c"/><stop offset="1" stop-color="#ee1c24"/></linearGradient><linearGradient id="specv" x1="0" x2="0" y1="0" y2="1"><stop offset="0" stop-color="#fff" stop-opacity="1"/><stop offset="0.45" stop-color="#fff" stop-opacity="0"/><stop offset="0.55" stop-color="#000" stop-opacity="0"/><stop offset="1" stop-color="#000" stop-opacity="1"/></linearGradient></defs><rect x="1721" y="879.4" width="104.5" height="3.2" fill="url(#gc)"/><path d="M1715.7 890.4 L1715.7 887.6 L1720.3 883.2 L1724.8999999999999 887.6 L1724.8999999999999 890.4 Z" fill="#d0d0d0"/><rect x="1721" y="905.4" width="104.5" height="3.2" fill="url(#gm)"/><path d="M1715.7 916.4 L1715.7 913.6 L1720.3 909.2 L1724.8999999999999 913.6 L1724.8999999999999 916.4 Z" fill="#d0d0d0"/><rect x="1721" y="931.4" width="104.5" height="3.2" fill="url(#gy)"/><path d="M1715.7 942.4 L1715.7 939.6 L1720.3 935.2 L1724.8999999999999 939.6 L1724.8999999999999 942.4 Z" fill="#d0d0d0"/><rect x="1721" y="957.4" width="104.5" height="3.2" fill="url(#gk)"/><path d="M1820.5 968.4 L1820.5 965.6 L1825.1 961.2 L1829.6999999999998 965.6 L1829.6999999999998 968.4 Z" fill="#d0d0d0"/><rect x="1654" y="980" width="13.4" height="13.4" fill="#fff"/><path d="M1654.4 993 L1667 980.4" stroke="#e8131d" stroke-width="1.8"/><rect x="1667.4" y="980" width="13.2" height="13.4" fill="#0a0a0a"/><rect x="1680.6" y="980" width="13.4" height="13.4" fill="#fff"/><rect x="1654" y="1004.5" width="239.5" height="22.5" fill="url(#spec)"/><rect x="1654" y="1004.5" width="239.5" height="22.5" fill="url(#specv)"/><rect x="1654" y="1004.5" width="239.5" height="22.5" fill="none" stroke="#3a3a3a" stroke-width="1"/></svg>
<div style="left:1702px;top:875.6px;font-size:10.2px;line-height:14px;color:#cfcfcf;white-space:nowrap;">C</div>
<div style="left:1834px;top:871px;width:35px;height:19.5px;background:#484848;border:1px solid #5a5a5a;"></div>
<div style="left:1837.5px;top:873.1px;font-size:10.6px;line-height:14px;color:#f0f0f0;white-space:nowrap;transform:scaleX(0.9);transform-origin:0 50%;">0</div>
<div style="left:1872.5px;top:875.0px;font-size:10.2px;line-height:14px;color:#cfcfcf;white-space:nowrap;">%</div>
<div style="left:1702px;top:901.6px;font-size:10.2px;line-height:14px;color:#cfcfcf;white-space:nowrap;">M</div>
<div style="left:1834px;top:897px;width:35px;height:19.5px;background:#484848;border:1px solid #5a5a5a;"></div>
<div style="left:1837.5px;top:899.1px;font-size:10.6px;line-height:14px;color:#f0f0f0;white-space:nowrap;transform:scaleX(0.9);transform-origin:0 50%;">0</div>
<div style="left:1872.5px;top:901.0px;font-size:10.2px;line-height:14px;color:#cfcfcf;white-space:nowrap;">%</div>
<div style="left:1702px;top:927.6px;font-size:10.2px;line-height:14px;color:#cfcfcf;white-space:nowrap;">Y</div>
<div style="left:1834px;top:923px;width:35px;height:19.5px;background:#484848;border:1px solid #5a5a5a;"></div>
<div style="left:1837.5px;top:925.1px;font-size:10.6px;line-height:14px;color:#f0f0f0;white-space:nowrap;transform:scaleX(0.9);transform-origin:0 50%;">0</div>
<div style="left:1872.5px;top:927.0px;font-size:10.2px;line-height:14px;color:#cfcfcf;white-space:nowrap;">%</div>
<div style="left:1702px;top:953.6px;font-size:10.2px;line-height:14px;color:#cfcfcf;white-space:nowrap;">K</div>
<div style="left:1834px;top:949px;width:35px;height:19.5px;background:#484848;border:1px solid #5a5a5a;"></div>
<div style="left:1837.5px;top:951.1px;font-size:10.6px;line-height:14px;color:#f0f0f0;white-space:nowrap;transform:scaleX(0.9);transform-origin:0 50%;">100</div>
<div style="left:1872.5px;top:953.0px;font-size:10.2px;line-height:14px;color:#cfcfcf;white-space:nowrap;">%</div>
<div style="left:1820.5px;top:980.5px;font-size:10px;line-height:12px;color:#cfcfcf;white-space:nowrap;border-bottom:1px dotted #a0a0a0;">#</div>
<div style="left:1834px;top:977px;width:60px;height:19.5px;background:#484848;border:1px solid #5a5a5a;"></div>
<div style="left:1838px;top:979.8px;font-size:10.6px;line-height:14px;color:#f0f0f0;white-space:nowrap;transform:scaleX(0.92);transform-origin:0 50%;">231F20</div>
<div style="left:941px;top:816.5px;width:238.5px;height:155.5px;background:#535353;border-radius:3px;overflow:hidden;box-shadow:0 0 5px rgba(0,0,0,0.35);"><div style="left:0px;top:0px;width:238.5px;height:41.5px;background:#424242;"></div><div style="left:115px;top:14.5px;width:70px;height:27px;background:#535353;"></div><div style="left:69px;top:14.5px;width:1px;height:27px;background:#383838;"></div><div style="left:114px;top:14.5px;width:1px;height:27px;background:#383838;"></div><div style="left:185px;top:14.5px;width:1px;height:27px;background:#383838;"></div></div>
<svg style="left:1149px;top:821.5px" width="7" height="6" viewBox="0 0 7 6"><path d="M2.8 0.6L0.8 3L2.8 5.4M6 0.6L4 3L6 5.4" fill="none" stroke="#c4c4c4" stroke-width="1"/></svg>
<svg style="left:1167px;top:820.8px" width="7" height="7" viewBox="0 0 7 7"><path d="M0.6 0.6L6.4 6.4M6.4 0.6L0.6 6.4" stroke="#d0d0d0" stroke-width="1.2"/></svg>
<div style="left:952px;top:836.4px;font-size:10.2px;line-height:14px;color:#ababab;white-space:nowrap;font-weight:bold;">Transform</div>
<div style="left:1021px;top:836.4px;font-size:10.5px;line-height:14px;color:#ababab;white-space:nowrap;font-weight:bold;">Align</div>
<div style="left:1066px;top:836.4px;font-size:10.3px;line-height:14px;color:#f4f4f4;white-space:nowrap;font-weight:bold;">Pathfinder</div>
<svg style="left:1161.5px;top:840.5px" width="11" height="9" viewBox="0 0 11 9"><path d="M0 1H11M0 4.5H11M0 8H11" stroke="#c4c4c4" stroke-width="1.4"/></svg>
<div style="left:946.5px;top:866.8px;font-size:10.2px;line-height:14px;color:#d4d4d4;white-space:nowrap;">Shape Modes:</div>
<div style="left:946.5px;top:919.5px;font-size:10.2px;line-height:14px;color:#d4d4d4;white-space:nowrap;">Pathfinders:</div>
<div style="left:1100px;top:890px;width:73px;height:19px;background:#585858;border:1px solid #5c5c5c;"></div>
<div style="left:1100px;top:892.5px;font-size:10.2px;line-height:14px;color:#727272;white-space:nowrap;width:73px;text-align:center;">Expand</div>
<svg style="left:0;top:0" width="1920" height="1038" viewBox="0 0 1920 1038"><g transform="translate(960.3,899.2)"><rect x="-7.5" y="-7.5" width="10" height="10" fill="#cbcbcb"/><rect x="-2.5" y="-2.5" width="10" height="10" fill="#cbcbcb"/></g><g transform="translate(998.4,899.2)"><rect x="-7.5" y="-7.5" width="10" height="10" fill="#cbcbcb"/><rect x="-1.9" y="-1.9" width="8.8" height="8.8" fill="#535353" stroke="#cbcbcb" stroke-width="1.2"/></g><g transform="translate(1036.4,899.2)"><rect x="-6.9" y="-6.9" width="8.8" height="8.8" fill="none" stroke="#cbcbcb" stroke-width="1.2"/><rect x="-1.9" y="-1.9" width="8.8" height="8.8" fill="none" stroke="#cbcbcb" stroke-width="1.2"/><rect x="-2.5" y="-2.5" width="5" height="5" fill="#cbcbcb"/></g><g transform="translate(1074.4,899.2)"><rect x="-7.5" y="-7.5" width="10" height="10" fill="#cbcbcb"/><rect x="-2.5" y="-2.5" width="10" height="10" fill="#cbcbcb"/><rect x="-1.2" y="-1.2" width="2.6" height="2.6" fill="#535353"/></g><g transform="translate(963.6,952.8)"><rect x="-6.9" y="-6.9" width="8.8" height="8.8" fill="none" stroke="#cbcbcb" stroke-width="1.2"/><rect x="-1.9" y="-1.9" width="8.8" height="8.8" fill="#cbcbcb"/><rect x="-1.9" y="-1.9" width="3.8" height="3.8" fill="#cbcbcb" stroke="#535353" stroke-width="1"/></g><g transform="translate(1001.2,952.8)"><rect x="-7.5" y="-7.5" width="10" height="10" fill="#cbcbcb"/><rect x="-2.5" y="-2.5" width="10" height="10" fill="#cbcbcb" stroke="#535353" stroke-width="1"/></g><g transform="translate(1039.4,952.8)"><rect x="-7.5" y="-7.5" width="10" height="10" fill="#cbcbcb"/><rect x="-2.5" y="-2.5" width="10" height="10" fill="#cbcbcb"/></g><g transform="translate(1077.8,952.8)"><rect x="-6.9" y="-6.9" width="8.8" height="8.8" fill="none" stroke="#8e8e8e" stroke-width="1.1"/><rect x="-1.9" y="-1.9" width="8.8" height="8.8" fill="none" stroke="#cbcbcb" stroke-width="1.2"/><rect x="-1.9" y="-1.9" width="3.8" height="3.8" fill="#cbcbcb"/></g><g transform="translate(1116.6,952.8)"><rect x="-6.9" y="-6.9" width="8.8" height="8.8" fill="none" stroke="#cbcbcb" stroke-width="1.2"/><rect x="-1.9" y="-1.9" width="8.8" height="8.8" fill="none" stroke="#cbcbcb" stroke-width="1.2"/></g><g transform="translate(1155.6,952.8)"><rect x="-2.5" y="-2.5" width="10" height="10" fill="#cbcbcb"/><rect x="-6.9" y="-6.9" width="8.8" height="8.8" fill="#535353" stroke="#cbcbcb" stroke-width="1.2"/></g></svg>
<div style="left:1361px;top:858.7px;width:239.4px;height:185px;background:#535353;border-radius:3px 3px 0 0;overflow:hidden;box-shadow:0 0 5px rgba(0,0,0,0.35);"><div style="left:0px;top:0px;width:239.4px;height:42px;background:#424242;"></div><div style="left:0px;top:14.5px;width:72.5px;height:27.5px;background:#535353;"></div><div style="left:72.5px;top:14.5px;width:1px;height:27.5px;background:#383838;"></div><div style="left:137px;top:14.5px;width:1px;height:27.5px;background:#383838;"></div><div style="left:197px;top:14.5px;width:1px;height:27.5px;background:#383838;"></div></div>
<svg style="left:1569.5px;top:863.5px" width="7" height="6" viewBox="0 0 7 6"><path d="M2.8 0.6L0.8 3L2.8 5.4M6 0.6L4 3L6 5.4" fill="none" stroke="#c4c4c4" stroke-width="1"/></svg>
<svg style="left:1587.2px;top:862.8px" width="7" height="7" viewBox="0 0 7 7"><path d="M0.6 0.6L6.4 6.4M6.4 0.6L0.6 6.4" stroke="#d0d0d0" stroke-width="1.2"/></svg>
<svg style="left:1367.5px;top:882px" width="5" height="9" viewBox="0 0 5 9"><path d="M0.6 3L2.5 0.8L4.4 3M0.6 6L2.5 8.2L4.4 6" fill="none" stroke="#b0b0b0" stroke-width="0.9"/></svg>
<div style="left:1378.5px;top:879.8px;font-size:10.4px;line-height:14px;color:#f4f4f4;white-space:nowrap;font-weight:bold;">Character</div>
<div style="left:1443.5px;top:879.8px;font-size:10.4px;line-height:14px;color:#ababab;white-space:nowrap;font-weight:bold;">Paragraph</div>
<div style="left:1507px;top:879.8px;font-size:10.4px;line-height:14px;color:#ababab;white-space:nowrap;font-weight:bold;">OpenType</div>
<svg style="left:1582.5px;top:882.8px" width="11" height="9" viewBox="0 0 11 9"><path d="M0 1H11M0 4.5H11M0 8H11" stroke="#c4c4c4" stroke-width="1.4"/></svg>
<div style="left:1368px;top:908.3px;width:206.5px;height:20px;background:#454545;border:1px solid #5a5a5a;"></div>
<svg style="left:1369.5px;top:912.5px" width="20" height="12" viewBox="0 0 20 12"><circle cx="4.6" cy="4.6" r="3.6" fill="none" stroke="#c6c6c6" stroke-width="1.1"/><path d="M7.2 7.4L10 10.6" stroke="#c6c6c6" stroke-width="1.3"/><path d="M12 3.6L15 6.4L18 3.6" fill="none" stroke="#c6c6c6" stroke-width="1.1"/></svg>
<div style="left:1395.3px;top:912.7px;font-size:10.2px;line-height:14px;color:#f0f0f0;white-space:nowrap;">Myriad Pro</div>
<div style="left:1574.5px;top:908.3px;width:18px;height:20px;background:#4a4a4a;border:1px solid #5a5a5a;border-left:0;"></div><svg style="left:1579.0px;top:915.6999999999999px" width="8" height="5.9" viewBox="0 0 8 5.9"><path d="M0.8 0.8 L4.0 4.4 L7.2 0.8" fill="none" stroke="#e4e4e4" stroke-width="1.5" stroke-linecap="round" stroke-linejoin="round"/></svg>
<div style="left:1368px;top:935px;width:206.5px;height:20px;background:#454545;border:1px solid #5a5a5a;"></div>
<div style="left:1374.4px;top:939.6px;font-size:10.2px;line-height:14px;color:#f0f0f0;white-space:nowrap;">Regular</div>
<div style="left:1574.5px;top:935px;width:18px;height:20px;background:#4a4a4a;border:1px solid #5a5a5a;border-left:0;"></div><svg style="left:1579.0px;top:942.4px" width="8" height="5.9" viewBox="0 0 8 5.9"><path d="M0.8 0.8 L4.0 4.4 L7.2 0.8" fill="none" stroke="#e4e4e4" stroke-width="1.5" stroke-linecap="round" stroke-linejoin="round"/></svg>
<svg style="left:1367.5px;top:970px" width="19" height="16" viewBox="0 0 19 16"><path d="M6 1H18.6V4.4H17.6L17 2.8H13.6V13L15.4 13.4V14.6H9.2V13.4L11 13V2.8H7.6L7 4.4H6Z" fill="#cdcdcd"/><path d="M0.4 7H8V9.6H7.2L6.8 8.4H5V13.4L6 13.6V14.6H2.4V13.6L3.4 13.4V8.4H1.6L1.2 9.6H0.4Z" fill="#cdcdcd"/></svg>
<div style="left:1390.7px;top:968.6px;width:17.6px;height:20px;background:#4a4a4a;border:1px solid #5a5a5a;border-right:0;"></div><svg style="left:1395.5px;top:972.2px" width="8" height="5.1" viewBox="0 0 8 5.1"><path d="M0.8 3.6 L4.0 0.8 L7.2 3.6" fill="none" stroke="#d8d8d8" stroke-width="1.2" stroke-linecap="round" stroke-linejoin="round"/></svg><svg style="left:1395.5px;top:980.0px" width="8" height="5.1" viewBox="0 0 8 5.1"><path d="M0.8 0.8 L4.0 3.6 L7.2 0.8" fill="none" stroke="#d8d8d8" stroke-width="1.2" stroke-linecap="round" stroke-linejoin="round"/></svg>
<div style="left:1408.3px;top:968.6px;width:45.7px;height:20px;background:#454545;border:1px solid #5a5a5a;"></div>
<div style="left:1411px;top:972.4px;font-size:10.2px;line-height:14px;color:#f0f0f0;white-space:nowrap;">12 pt</div>
<div style="left:1454px;top:968.6px;width:18.8px;height:20px;background:#4a4a4a;border:1px solid #5a5a5a;border-left:0;"></div><svg style="left:1458.9px;top:976.0px" width="8" height="5.9" viewBox="0 0 8 5.9"><path d="M0.8 0.8 L4.0 4.4 L7.2 0.8" fill="none" stroke="#e4e4e4" stroke-width="1.5" stroke-linecap="round" stroke-linejoin="round"/></svg>
<svg style="left:1488.5px;top:968.5px" width="18" height="20" viewBox="0 0 18 20"><path d="M8 7.6L11.4 0.8L14.8 7.6M9.2 5.4H13.6M6.6 8.4H16.6" fill="none" stroke="#cdcdcd" stroke-width="1.1"/><path d="M8 17.6L11.4 10.8L14.8 17.6M9.2 15.4H13.6M6.6 18.6H16.6" fill="none" stroke="#cdcdcd" stroke-width="1.1"/><path d="M2.6 9V18" stroke="#cdcdcd" stroke-width="1.1"/><path d="M0.6 11L2.6 8.6L4.6 11M0.6 16L2.6 18.4L4.6 16" fill="none" stroke="#cdcdcd" stroke-width="1"/></svg>
<div style="left:1510.8px;top:968.6px;width:17.5px;height:20px;background:#4a4a4a;border:1px solid #5a5a5a;border-right:0;"></div><svg style="left:1515.55px;top:972.2px" width="8" height="5.1" viewBox="0 0 8 5.1"><path d="M0.8 3.6 L4.0 0.8 L7.2 3.6" fill="none" stroke="#d8d8d8" stroke-width="1.2" stroke-linecap="round" stroke-linejoin="round"/></svg><svg style="left:1515.55px;top:980.0px" width="8" height="5.1" viewBox="0 0 8 5.1"><path d="M0.8 0.8 L4.0 3.6 L7.2 0.8" fill="none" stroke="#d8d8d8" stroke-width="1.2" stroke-linecap="round" stroke-linejoin="round"/></svg>
<div style="left:1528.3px;top:968.6px;width:46.2px;height:20px;background:#454545;border:1px solid #5a5a5a;"></div>
<div style="left:1531px;top:972.4px;font-size:10.2px;line-height:14px;color:#f0f0f0;white-space:nowrap;transform:scaleX(0.93);transform-origin:0 50%;">(14.4 pt)</div>
<div style="left:1574.5px;top:968.6px;width:18px;height:20px;background:#4a4a4a;border:1px solid #5a5a5a;border-left:0;"></div><svg style="left:1579.0px;top:976.0px" width="8" height="5.9" viewBox="0 0 8 5.9"><path d="M0.8 0.8 L4.0 4.4 L7.2 0.8" fill="none" stroke="#e4e4e4" stroke-width="1.5" stroke-linecap="round" stroke-linejoin="round"/></svg>
<svg style="left:1367.5px;top:997.5px" width="19" height="18" viewBox="0 0 19 18"><path d="M0.6 1.4L4 11L7.4 1.4M12 1L6.4 12.6M10.4 11L14 1.4L17.6 11M11.6 7.8H16.4" fill="none" stroke="#cdcdcd" stroke-width="1.2"/><path d="M17.6 15.4H10.4M12.6 13.4L10.4 15.4L12.6 17.4" fill="none" stroke="#cdcdcd" stroke-width="1.1"/></svg>
<div style="left:1390.7px;top:995.6px;width:17.6px;height:20px;background:#4a4a4a;border:1px solid #5a5a5a;border-right:0;"></div><svg style="left:1395.5px;top:999.2px" width="8" height="5.1" viewBox="0 0 8 5.1"><path d="M0.8 3.6 L4.0 0.8 L7.2 3.6" fill="none" stroke="#d8d8d8" stroke-width="1.2" stroke-linecap="round" stroke-linejoin="round"/></svg><svg style="left:1395.5px;top:1007.0px" width="8" height="5.1" viewBox="0 0 8 5.1"><path d="M0.8 0.8 L4.0 3.6 L7.2 0.8" fill="none" stroke="#d8d8d8" stroke-width="1.2" stroke-linecap="round" stroke-linejoin="round"/></svg>
<div style="left:1408.3px;top:995.6px;width:45.7px;height:20px;background:#454545;border:1px solid #5a5a5a;"></div>
<div style="left:1411px;top:999.4px;font-size:10.2px;line-height:14px;color:#f0f0f0;white-space:nowrap;">Auto</div>
<div style="left:1454px;top:995.6px;width:18.8px;height:20px;background:#4a4a4a;border:1px solid #5a5a5a;border-left:0;"></div><svg style="left:1458.9px;top:1003.0px" width="8" height="5.9" viewBox="0 0 8 5.9"><path d="M0.8 0.8 L4.0 4.4 L7.2 0.8" fill="none" stroke="#e4e4e4" stroke-width="1.5" stroke-linecap="round" stroke-linejoin="round"/></svg>
<svg style="left:1488px;top:996.5px" width="19" height="19" viewBox="0 0 19 19"><rect x="0" y="0.4" width="18.6" height="10.6" fill="#cdcdcd"/><path d="M2 2.4L5 9L8 2.4M10.4 9L13.4 2.4L16.4 9M11.6 6.8H15.2" fill="none" stroke="#454545" stroke-width="1.3"/><path d="M1 15.4H17.6M3.4 13.2L1 15.4L3.4 17.6M15.2 13.2L17.6 15.4L15.2 17.6" fill="none" stroke="#cdcdcd" stroke-width="1.1"/></svg>
<div style="left:1510.8px;top:995.6px;width:17.5px;height:20px;background:#4a4a4a;border:1px solid #5a5a5a;border-right:0;"></div><svg style="left:1515.55px;top:999.2px" width="8" height="5.1" viewBox="0 0 8 5.1"><path d="M0.8 3.6 L4.0 0.8 L7.2 3.6" fill="none" stroke="#d8d8d8" stroke-width="1.2" stroke-linecap="round" stroke-linejoin="round"/></svg><svg style="left:1515.55px;top:1007.0px" width="8" height="5.1" viewBox="0 0 8 5.1"><path d="M0.8 0.8 L4.0 3.6 L7.2 0.8" fill="none" stroke="#d8d8d8" stroke-width="1.2" stroke-linecap="round" stroke-linejoin="round"/></svg>
<div style="left:1528.3px;top:995.6px;width:46.2px;height:20px;background:#454545;border:1px solid #5a5a5a;"></div>
<div style="left:1531px;top:999.4px;font-size:10.2px;line-height:14px;color:#f0f0f0;white-space:nowrap;">0</div>
<div style="left:1574.5px;top:995.6px;width:18px;height:20px;background:#4a4a4a;border:1px solid #5a5a5a;border-left:0;"></div><svg style="left:1579.0px;top:1003.0px" width="8" height="5.9" viewBox="0 0 8 5.9"><path d="M0.8 0.8 L4.0 4.4 L7.2 0.8" fill="none" stroke="#e4e4e4" stroke-width="1.5" stroke-linecap="round" stroke-linejoin="round"/></svg>
<div style="left:1368px;top:1035.0px;font-size:10.2px;line-height:14px;color:#d4d4d4;white-space:nowrap;">Snap to Glyph</div>
<div style="left:1538.5px;top:1035.6px;width:9px;height:6px;border:1.2px solid #c8c8c8;"></div>
<div style="left:1578px;top:1035.4px;width:11px;height:11px;border:1.2px solid #c8c8c8;border-radius:6px;"></div>
<div style="left:1361px;top:1034px;width:240px;height:4px;border-top:0;"></div>
</div></body></html>
